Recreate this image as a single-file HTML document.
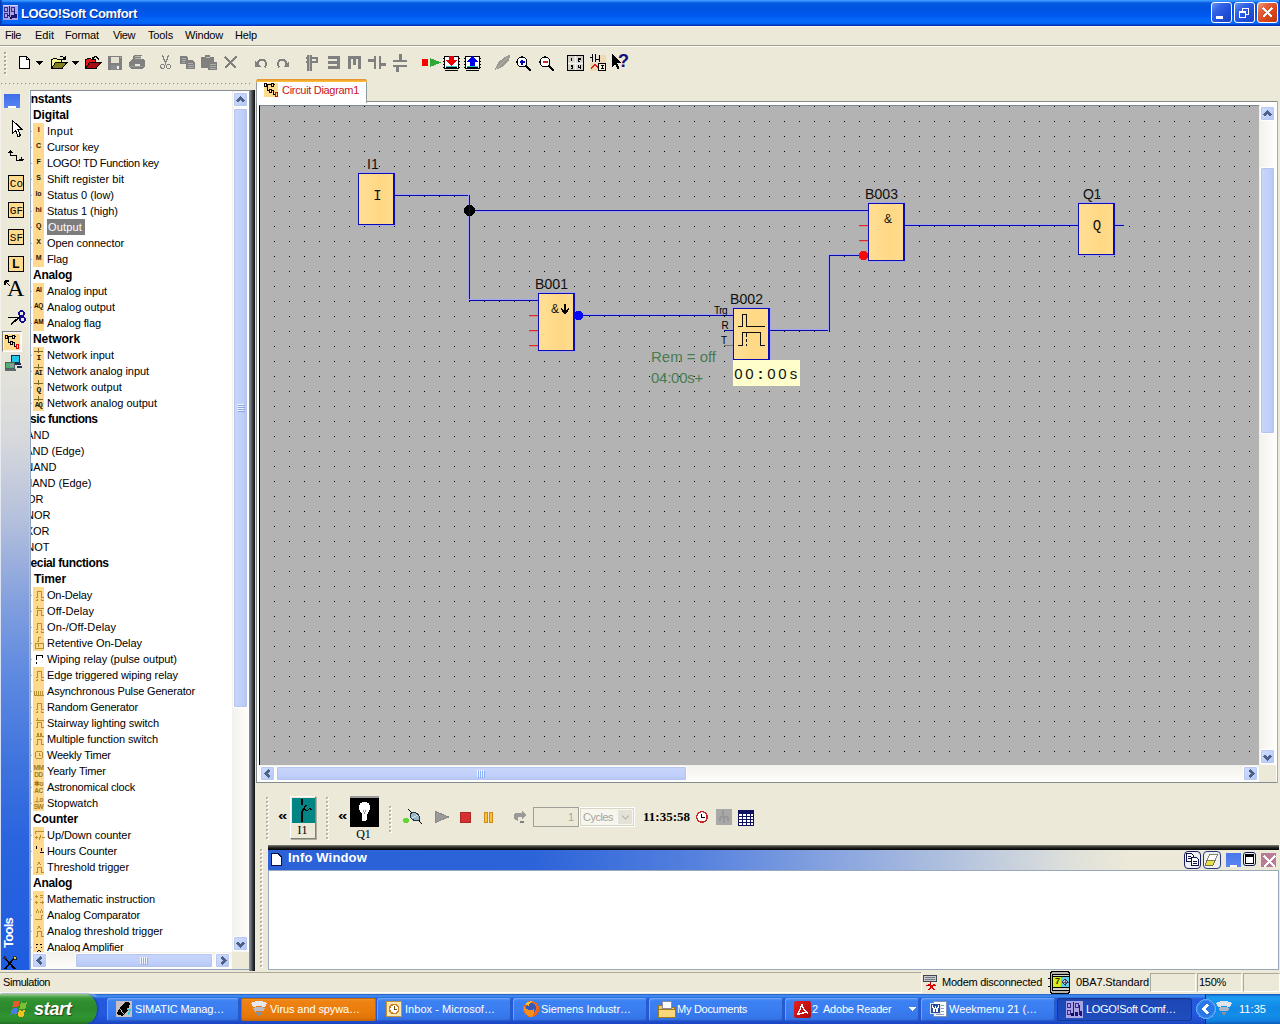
<!DOCTYPE html>
<html><head><meta charset="utf-8"><title>LOGO!Soft Comfort</title>
<style>
html,body{margin:0;padding:0;}
body{width:1280px;height:1024px;overflow:hidden;background:#ece9d8;position:relative;font-family:"Liberation Sans",sans-serif;font-size:11px;color:#000;}
div{position:absolute;box-sizing:border-box;}
svg{position:absolute;overflow:visible;}
.clip{overflow:hidden;}
</style></head>
<body>
<div style="left:0px;top:0px;width:1280px;height:26px;background:linear-gradient(to bottom,#3a96ff 0,#3a96ff 1px,#2a84fa 1.500px,#0e62e4 2.500px,#0358e0 4px,#0054e0 8px,#0056e8 12px,#0059f2 16px,#0466f8 19px,#0468fa 22px,#0060f4 24px,#0232b4 25px,#0232b4 26px);"></div>
<div style="left:0px;top:26px;width:1280px;height:1px;background:#f7f6f4;"></div>
<div style="left:0px;top:0px;width:3px;height:26px;background:linear-gradient(to right,#0238a8,rgba(2,56,168,0));"></div>
<div style="left:1279px;top:0px;width:1px;height:26px;background:#0a3cb0;"></div>
<svg style="left:3px;top:5px" width="15" height="15" viewBox="0 0 15 15" shape-rendering="crispEdges" ><rect x="0" y="0" width="15" height="15" fill="#a9a4e6"/><rect x="0" y="0" width="15" height="1" fill="#d8d4f8"/><rect x="1" y="2" width="3" height="4" fill="none" stroke="#3a2c90" stroke-width="1"/><rect x="1" y="8" width="3" height="4" fill="none" stroke="#3a2c90" stroke-width="1"/><rect x="6" y="1" width="1" height="11" fill="#20186c"/><rect x="4" y="10" width="3" height="1" fill="#20186c"/><rect x="8" y="2" width="3" height="4" fill="none" stroke="#3a2c90" stroke-width="1"/><rect x="11" y="4" width="1" height="9" fill="#20186c"/><rect x="8" y="10" width="3" height="3" fill="#1a1478"/><rect x="12" y="9" width="2" height="4" fill="#1a1478"/><rect x="7" y="12" width="2" height="2" fill="#0c0c50"/></svg>
<div style="left:21px;top:5.5px;height:16px;line-height:16px;font:bold 13px 'Liberation Sans';line-height:16px;letter-spacing:-0.355px;color:#fff;white-space:pre;text-shadow:1px 1px 0 #0a2a8a;">LOGO!Soft Comfort</div>
<div style="left:1211px;top:2px;width:21px;height:21px;background:linear-gradient(135deg,#6a94f4 0%,#3564e6 30%,#2250dc 60%,#1a40c0 100%);border:1px solid #fff;border-radius:3px;"></div>
<div style="left:1234px;top:2px;width:21px;height:21px;background:linear-gradient(135deg,#6a94f4 0%,#3564e6 30%,#2250dc 60%,#1a40c0 100%);border:1px solid #fff;border-radius:3px;"></div>
<div style="left:1257px;top:2px;width:21px;height:21px;background:linear-gradient(135deg,#f0a080 0%,#e2603c 30%,#d8481c 60%,#c03410 100%);border:1px solid #fff;border-radius:3px;"></div>
<div style="left:1216px;top:16px;width:7px;height:3px;background:#fff;"></div>
<svg style="left:1234px;top:2px" width="21" height="21" viewBox="0 0 21 21" shape-rendering="crispEdges" ><path d="M8.5 8.5v-2.5h6v6h-2.5" fill="none" stroke="#fff" stroke-width="1"/><rect x="5.5" y="9.5" width="6" height="6" fill="none" stroke="#fff"/><rect x="5" y="9" width="7" height="2" fill="#fff"/></svg>
<svg style="left:1257px;top:2px" width="21" height="21" viewBox="0 0 21 21" shape-rendering="crispEdges" shape-rendering="geometricPrecision"><path d="M6 6l9 9M15 6l-9 9" stroke="#fff" stroke-width="2.2" fill="none"/></svg>
<div style="left:0px;top:26px;width:1280px;height:19px;background:#ece9d8;"></div>
<div style="left:0px;top:26px;width:1280px;height:1px;background:#f7f6f4;"></div>
<div style="left:5px;top:27.5px;height:15px;line-height:15px;font:normal 11px 'Liberation Sans';line-height:15px;letter-spacing:-0.431px;color:#000;white-space:pre;">File</div>
<div style="left:35px;top:27.5px;height:15px;line-height:15px;font:normal 11px 'Liberation Sans';line-height:15px;letter-spacing:0.011px;color:#000;white-space:pre;">Edit</div>
<div style="left:65px;top:27.5px;height:15px;line-height:15px;font:normal 11px 'Liberation Sans';line-height:15px;letter-spacing:-0.139px;color:#000;white-space:pre;">Format</div>
<div style="left:113px;top:27.5px;height:15px;line-height:15px;font:normal 11px 'Liberation Sans';line-height:15px;letter-spacing:-0.411px;color:#000;white-space:pre;">View</div>
<div style="left:148px;top:27.5px;height:15px;line-height:15px;font:normal 11px 'Liberation Sans';line-height:15px;letter-spacing:-0.136px;color:#000;white-space:pre;">Tools</div>
<div style="left:185px;top:27.5px;height:15px;line-height:15px;font:normal 11px 'Liberation Sans';line-height:15px;letter-spacing:-0.187px;color:#000;white-space:pre;">Window</div>
<div style="left:235px;top:27.5px;height:15px;line-height:15px;font:normal 11px 'Liberation Sans';line-height:15px;letter-spacing:-0.156px;color:#000;white-space:pre;">Help</div>
<div style="left:0px;top:45px;width:1280px;height:1px;background:#a4a192;"></div>
<div style="left:0px;top:46px;width:1280px;height:1px;background:#fbfaf6;"></div>
<div style="left:4px;top:52px;width:2px;height:2px;background:#a9a694;"></div>
<div style="left:5px;top:53px;width:2px;height:2px;background:#fff;"></div>
<div style="left:5px;top:53px;width:1px;height:1px;background:#a9a694;"></div>
<div style="left:4px;top:56px;width:2px;height:2px;background:#a9a694;"></div>
<div style="left:5px;top:57px;width:2px;height:2px;background:#fff;"></div>
<div style="left:5px;top:57px;width:1px;height:1px;background:#a9a694;"></div>
<div style="left:4px;top:60px;width:2px;height:2px;background:#a9a694;"></div>
<div style="left:5px;top:61px;width:2px;height:2px;background:#fff;"></div>
<div style="left:5px;top:61px;width:1px;height:1px;background:#a9a694;"></div>
<div style="left:4px;top:64px;width:2px;height:2px;background:#a9a694;"></div>
<div style="left:5px;top:65px;width:2px;height:2px;background:#fff;"></div>
<div style="left:5px;top:65px;width:1px;height:1px;background:#a9a694;"></div>
<div style="left:4px;top:68px;width:2px;height:2px;background:#a9a694;"></div>
<div style="left:5px;top:69px;width:2px;height:2px;background:#fff;"></div>
<div style="left:5px;top:69px;width:1px;height:1px;background:#a9a694;"></div>
<div style="left:4px;top:72px;width:2px;height:2px;background:#a9a694;"></div>
<div style="left:5px;top:73px;width:2px;height:2px;background:#fff;"></div>
<div style="left:5px;top:73px;width:1px;height:1px;background:#a9a694;"></div>
<svg style="left:19px;top:56px" width="12" height="13" viewBox="0 0 12 13" shape-rendering="crispEdges" ><path d="M0.5 0.5h7l3 3v9h-10z" fill="#fff" stroke="#000"/><path d="M7.5 0.5v3h3" fill="none" stroke="#000"/></svg>
<svg style="left:36px;top:61px" width="7" height="4" viewBox="0 0 7 4" shape-rendering="crispEdges" shape-rendering="geometricPrecision"><path d="M0 0h7l-3.5 4z" fill="#000"/></svg>
<svg style="left:51px;top:55px" width="17" height="14" viewBox="0 0 17 14" shape-rendering="crispEdges" shape-rendering="geometricPrecision"><path d="M0.5 13.5v-9h1l1-1h3l1 1h4v3" fill="#f4f48c" stroke="#000"/><path d="M0.5 13.5l4-6h11.5l-5 6z" fill="#80801c" stroke="#000"/><path d="M8.5 2.5q2.5-3 5 1" fill="none" stroke="#000"/><path d="M14.5 1v4h-4z" fill="#000"/></svg>
<svg style="left:72px;top:61px" width="7" height="4" viewBox="0 0 7 4" shape-rendering="crispEdges" shape-rendering="geometricPrecision"><path d="M0 0h7l-3.5 4z" fill="#000"/></svg>
<svg style="left:85px;top:55px" width="17" height="14" viewBox="0 0 17 14" shape-rendering="crispEdges" shape-rendering="geometricPrecision"><path d="M0.5 13.5v-9h1l1-1h3l1 1h4v3" fill="#e81818" stroke="#000"/><path d="M0.5 13.5l4-6h11.5l-5 6z" fill="#a80c0c" stroke="#000"/><path d="M8 3.5q2.5-4 6 1" fill="none" stroke="#000" stroke-width="1.2"/><path d="M6.5 1v4h4z" fill="#000"/></svg>
<svg style="left:108px;top:56px" width="14" height="14" viewBox="0 0 14 14" shape-rendering="crispEdges" ><rect x="0" y="0" width="14" height="14" fill="#808080"/><rect x="3" y="1" width="8" height="6" fill="#e4e1d2"/><rect x="3" y="9" width="8" height="5" fill="#8c8c8c"/><rect x="9" y="10" width="2" height="3" fill="#f0f0f0"/><rect x="12" y="1" width="1" height="1" fill="#c0c0c0"/></svg>
<svg style="left:129px;top:55px" width="16" height="14" viewBox="0 0 16 14" shape-rendering="crispEdges" shape-rendering="geometricPrecision"><path d="M5 0h8l-2 5h-8z" fill="#808080"/><path d="M6 1.5h6M5.5 3h6" stroke="#c8c8c0" stroke-width="0.8"/><path d="M0 7l3-3h11l2 2v5l-2 3h-12l-2-2z" fill="#808080"/><rect x="6" y="9" width="5" height="1.5" fill="#e8e8e0"/><path d="M1 11.5h13" stroke="#a0a098" stroke-width="0.8"/></svg>
<svg style="left:160px;top:55px" width="11" height="15" viewBox="0 0 11 15" shape-rendering="crispEdges" shape-rendering="geometricPrecision"><path d="M2.5 0.5l3.5 9M8.5 0.5l-3.5 9" stroke="#808080" stroke-width="1.3" fill="none"/><circle cx="2.5" cy="11.5" r="2" fill="none" stroke="#808080" stroke-width="1.2"/><circle cx="8.5" cy="11.5" r="2" fill="none" stroke="#808080" stroke-width="1.2"/></svg>
<svg style="left:180px;top:56px" width="15" height="13" viewBox="0 0 15 13" shape-rendering="crispEdges" shape-rendering="geometricPrecision"><path d="M0 0h6l2 2v6h-8z" fill="#808080"/><path d="M6 4h6l3 3v6h-9z" fill="#808080"/><path d="M1.5 2.5h4M1.5 4.5h4M1.5 6.5h3" stroke="#b8b8b0" stroke-width="0.8"/><path d="M7.5 7.5h5M7.5 9.5h6M7.5 11.5h6" stroke="#b8b8b0" stroke-width="0.8"/></svg>
<svg style="left:201px;top:55px" width="17" height="15" viewBox="0 0 17 15" shape-rendering="crispEdges" shape-rendering="geometricPrecision"><path d="M0 3q0-1.5 1.5-1.5h10q1.5 0 1.5 1.5v10h-13z" fill="#808080"/><rect x="4" y="0" width="5" height="3" rx="1" fill="#808080"/><rect x="4.5" y="1.5" width="4" height="1" fill="#c0c0b8"/><path d="M7 7h9v8h-9z" fill="#808080"/><path d="M8.5 9.5h6M8.5 11.5h6M8.5 13.5h6" stroke="#b8b8b0" stroke-width="0.8"/></svg>
<svg style="left:224px;top:56px" width="14" height="13" viewBox="0 0 14 13" shape-rendering="crispEdges" shape-rendering="geometricPrecision"><path d="M1 1l11 11M12.5 0.5l-11.5 11.5" stroke="#808080" stroke-width="2" fill="none"/></svg>
<svg style="left:255px;top:57.5px" width="13" height="9" viewBox="0 0 13 9" shape-rendering="crispEdges" shape-rendering="geometricPrecision"><path d="M3.400 8.200A4.200 4.200 0 1 1 9.800 9" stroke="#808080" stroke-width="2" fill="none"/><path d="M0 3v5.500h5.500z" fill="#808080"/></svg>
<svg style="left:276px;top:57.5px" width="13" height="9" viewBox="0 0 13 9" shape-rendering="crispEdges" shape-rendering="geometricPrecision"><g transform="translate(13,0) scale(-1,1)"><path d="M3.400 8.200A4.200 4.200 0 1 1 9.800 9" stroke="#808080" stroke-width="2" fill="none"/><path d="M0 3v5.500h5.500z" fill="#808080"/></g></svg>
<svg style="left:306px;top:54px" width="13" height="17" viewBox="0 0 13 17" shape-rendering="crispEdges" ><rect x="1" y="1" width="2" height="16" fill="#808080"/><rect x="4" y="1" width="2" height="16" fill="#808080"/><rect x="0" y="3" width="12" height="2" fill="#808080"/><rect x="0" y="7" width="12" height="2" fill="#808080"/><rect x="10" y="3" width="2" height="6" fill="#808080"/><rect x="3" y="1" width="1" height="16" fill="#b8b8b0"/></svg>
<svg style="left:328px;top:56px" width="12" height="13" viewBox="0 0 12 13" shape-rendering="crispEdges" ><rect x="0" y="0" width="12" height="3" fill="#808080"/><rect x="0" y="5" width="12" height="3" fill="#808080"/><rect x="0" y="10" width="12" height="3" fill="#808080"/><rect x="9" y="0" width="3" height="13" fill="#808080"/></svg>
<svg style="left:348px;top:56px" width="13" height="13" viewBox="0 0 13 13" shape-rendering="crispEdges" ><rect x="0" y="0" width="13" height="3" fill="#808080"/><rect x="0" y="0" width="3" height="13" fill="#808080"/><rect x="5" y="0" width="3" height="9" fill="#808080"/><rect x="10" y="0" width="3" height="13" fill="#808080"/></svg>
<svg style="left:368px;top:56px" width="18" height="13" viewBox="0 0 18 13" shape-rendering="crispEdges" ><rect x="0" y="3" width="8" height="3" fill="#808080"/><rect x="6" y="0" width="2" height="13" fill="#808080"/><rect x="11" y="0" width="2" height="13" fill="#808080"/><rect x="11" y="7" width="7" height="3" fill="#808080"/></svg>
<svg style="left:393px;top:54px" width="14" height="18" viewBox="0 0 14 18" shape-rendering="crispEdges" ><rect x="6" y="0" width="3" height="8" fill="#808080"/><rect x="0" y="6" width="14" height="2" fill="#808080"/><rect x="0" y="11" width="14" height="2" fill="#808080"/><rect x="3" y="11" width="3" height="7" fill="#808080"/></svg>
<svg style="left:421px;top:58px" width="20" height="11" viewBox="0 0 20 11" shape-rendering="crispEdges" shape-rendering="geometricPrecision"><rect x="1" y="1" width="6" height="7" fill="#f80000"/><path d="M9 0l11 4.500l-11 4.500z" fill="#30a838"/></svg>
<svg style="left:443px;top:54.5px" width="17" height="17" viewBox="0 0 17 17" shape-rendering="crispEdges" shape-rendering="geometricPrecision"><rect x="1.500" y="1.500" width="14" height="12" fill="#fff" stroke="#000"/><path d="M0 3h2M0 6h2M0 9h2M0 12h2M15 3h2M15 6h2M15 9h2M15 12h2" stroke="#000"/><rect x="3" y="12" width="11" height="2" fill="#000"/><rect x="2" y="15" width="13" height="1" fill="#000"/><rect x="3" y="11" width="11" height="1" fill="#30c8c8"/><path d="M6 1h5v4h3l-5.500 6l-5.500-6h3z" fill="#e80000"/></svg>
<svg style="left:464px;top:54.5px" width="17" height="17" viewBox="0 0 17 17" shape-rendering="crispEdges" shape-rendering="geometricPrecision"><rect x="1.500" y="1.500" width="14" height="12" fill="#fff" stroke="#000"/><path d="M0 3h2M0 6h2M0 9h2M0 12h2M15 3h2M15 6h2M15 9h2M15 12h2" stroke="#000"/><rect x="3" y="12" width="11" height="2" fill="#000"/><rect x="2" y="15" width="13" height="1" fill="#000"/><rect x="3" y="11" width="11" height="1" fill="#30c8c8"/><path d="M6 11h5v-4h3l-5.500-6l-5.500 6h3z" fill="#0000e8"/></svg>
<svg style="left:495px;top:55px" width="16" height="15" viewBox="0 0 16 15" shape-rendering="crispEdges" shape-rendering="geometricPrecision"><path d="M0 15q1-6 6-10q5-4.500 9-5q0 5-4 9q-4 4-11 6z" fill="#9a9a92"/><path d="M1 14l12-12" stroke="#b8b8b0" stroke-width="0.800"/></svg>
<svg style="left:516px;top:56px" width="16" height="16" viewBox="0 0 16 16" shape-rendering="crispEdges" shape-rendering="geometricPrecision"><circle cx="6" cy="6" r="5" fill="#fff" stroke="#000" stroke-width="1.200"/><path d="M3.500 6h5" stroke="#0000c0" stroke-width="1.300"/><path d="M6 3.500v5" stroke="#0000c0" stroke-width="1.300"/><path d="M10 10l5 5" stroke="#000" stroke-width="2.200"/></svg>
<svg style="left:539px;top:56px" width="16" height="16" viewBox="0 0 16 16" shape-rendering="crispEdges" shape-rendering="geometricPrecision"><circle cx="6" cy="6" r="5" fill="#fff" stroke="#000" stroke-width="1.200"/><path d="M3.500 6h5" stroke="#c03030" stroke-width="1.300"/><path d="M10 10l5 5" stroke="#000" stroke-width="2.200"/></svg>
<svg style="left:567px;top:55px" width="17" height="16" viewBox="0 0 17 16" shape-rendering="crispEdges" ><rect x="0.500" y="0.500" width="16" height="15" fill="#d4d0c8" stroke="#000"/><path d="M8.500 1v14M1 8h15" stroke="#fff"/><path d="M8.500 2v12M2 8h13" stroke="#e8e8e8" stroke-width="3" opacity="0.600"/><path d="M4.500 3v3M11 3h2v1.500h-2v1.500h2M4 10h1.500v3h-1.500M5.500 11.500h-1.500M11 10v2h2M13 10v4" stroke="#000" stroke-width="1" fill="none"/></svg>
<svg style="left:590px;top:54px" width="17" height="17" viewBox="0 0 17 17" shape-rendering="crispEdges" shape-rendering="geometricPrecision"><rect x="0" y="1" width="16" height="16" fill="#f0d8b0"/><rect x="0" y="1" width="9" height="8" fill="#e8e4d8"/><path d="M2.500 0v8M5.500 0v8M9.500 1v7M0 3.500h3M5 5.500h5" stroke="#000"/><path d="M1 15l4-5l3 4" fill="none" stroke="#d82020" stroke-width="1.300"/><rect x="8.500" y="9.500" width="7" height="7" fill="#f8f0d8" stroke="#000"/><path d="M10.500 11.500h3M10.500 14.500h3M12 11.500v3" stroke="#000"/></svg>
<svg style="left:611px;top:54px" width="18" height="17" viewBox="0 0 18 17" shape-rendering="crispEdges" shape-rendering="geometricPrecision"><path d="M1 0v13l3-3l2.500 5l2-1l-2.500-5h4.500z" fill="#000"/></svg>
<div style="left:618px;top:51px;font:bold 18px 'Liberation Sans';color:#101078;line-height:20px;">?</div>
<div style="left:1px;top:83px;width:2px;height:2px;background:#cfccbc;"></div>
<div style="left:1px;top:83px;width:1px;height:1px;background:#a4a190;"></div>
<div style="left:2px;top:84px;width:1px;height:1px;background:#fff;"></div>
<div style="left:5px;top:83px;width:2px;height:2px;background:#cfccbc;"></div>
<div style="left:5px;top:83px;width:1px;height:1px;background:#a4a190;"></div>
<div style="left:6px;top:84px;width:1px;height:1px;background:#fff;"></div>
<div style="left:9px;top:83px;width:2px;height:2px;background:#cfccbc;"></div>
<div style="left:9px;top:83px;width:1px;height:1px;background:#a4a190;"></div>
<div style="left:10px;top:84px;width:1px;height:1px;background:#fff;"></div>
<div style="left:13px;top:83px;width:2px;height:2px;background:#cfccbc;"></div>
<div style="left:13px;top:83px;width:1px;height:1px;background:#a4a190;"></div>
<div style="left:14px;top:84px;width:1px;height:1px;background:#fff;"></div>
<div style="left:17px;top:83px;width:2px;height:2px;background:#cfccbc;"></div>
<div style="left:17px;top:83px;width:1px;height:1px;background:#a4a190;"></div>
<div style="left:18px;top:84px;width:1px;height:1px;background:#fff;"></div>
<div style="left:21px;top:83px;width:2px;height:2px;background:#cfccbc;"></div>
<div style="left:21px;top:83px;width:1px;height:1px;background:#a4a190;"></div>
<div style="left:22px;top:84px;width:1px;height:1px;background:#fff;"></div>
<div style="left:25px;top:83px;width:2px;height:2px;background:#cfccbc;"></div>
<div style="left:25px;top:83px;width:1px;height:1px;background:#a4a190;"></div>
<div style="left:26px;top:84px;width:1px;height:1px;background:#fff;"></div>
<div style="left:29px;top:83px;width:2px;height:2px;background:#cfccbc;"></div>
<div style="left:29px;top:83px;width:1px;height:1px;background:#a4a190;"></div>
<div style="left:30px;top:84px;width:1px;height:1px;background:#fff;"></div>
<div style="left:33px;top:83px;width:2px;height:2px;background:#cfccbc;"></div>
<div style="left:33px;top:83px;width:1px;height:1px;background:#a4a190;"></div>
<div style="left:34px;top:84px;width:1px;height:1px;background:#fff;"></div>
<div style="left:37px;top:83px;width:2px;height:2px;background:#cfccbc;"></div>
<div style="left:37px;top:83px;width:1px;height:1px;background:#a4a190;"></div>
<div style="left:38px;top:84px;width:1px;height:1px;background:#fff;"></div>
<div style="left:41px;top:83px;width:2px;height:2px;background:#cfccbc;"></div>
<div style="left:41px;top:83px;width:1px;height:1px;background:#a4a190;"></div>
<div style="left:42px;top:84px;width:1px;height:1px;background:#fff;"></div>
<div style="left:45px;top:83px;width:2px;height:2px;background:#cfccbc;"></div>
<div style="left:45px;top:83px;width:1px;height:1px;background:#a4a190;"></div>
<div style="left:46px;top:84px;width:1px;height:1px;background:#fff;"></div>
<div style="left:49px;top:83px;width:2px;height:2px;background:#cfccbc;"></div>
<div style="left:49px;top:83px;width:1px;height:1px;background:#a4a190;"></div>
<div style="left:50px;top:84px;width:1px;height:1px;background:#fff;"></div>
<div style="left:53px;top:83px;width:2px;height:2px;background:#cfccbc;"></div>
<div style="left:53px;top:83px;width:1px;height:1px;background:#a4a190;"></div>
<div style="left:54px;top:84px;width:1px;height:1px;background:#fff;"></div>
<div style="left:57px;top:83px;width:2px;height:2px;background:#cfccbc;"></div>
<div style="left:57px;top:83px;width:1px;height:1px;background:#a4a190;"></div>
<div style="left:58px;top:84px;width:1px;height:1px;background:#fff;"></div>
<div style="left:61px;top:83px;width:2px;height:2px;background:#cfccbc;"></div>
<div style="left:61px;top:83px;width:1px;height:1px;background:#a4a190;"></div>
<div style="left:62px;top:84px;width:1px;height:1px;background:#fff;"></div>
<div style="left:65px;top:83px;width:2px;height:2px;background:#cfccbc;"></div>
<div style="left:65px;top:83px;width:1px;height:1px;background:#a4a190;"></div>
<div style="left:66px;top:84px;width:1px;height:1px;background:#fff;"></div>
<div style="left:69px;top:83px;width:2px;height:2px;background:#cfccbc;"></div>
<div style="left:69px;top:83px;width:1px;height:1px;background:#a4a190;"></div>
<div style="left:70px;top:84px;width:1px;height:1px;background:#fff;"></div>
<div style="left:73px;top:83px;width:2px;height:2px;background:#cfccbc;"></div>
<div style="left:73px;top:83px;width:1px;height:1px;background:#a4a190;"></div>
<div style="left:74px;top:84px;width:1px;height:1px;background:#fff;"></div>
<div style="left:77px;top:83px;width:2px;height:2px;background:#cfccbc;"></div>
<div style="left:77px;top:83px;width:1px;height:1px;background:#a4a190;"></div>
<div style="left:78px;top:84px;width:1px;height:1px;background:#fff;"></div>
<div style="left:81px;top:83px;width:2px;height:2px;background:#cfccbc;"></div>
<div style="left:81px;top:83px;width:1px;height:1px;background:#a4a190;"></div>
<div style="left:82px;top:84px;width:1px;height:1px;background:#fff;"></div>
<div style="left:85px;top:83px;width:2px;height:2px;background:#cfccbc;"></div>
<div style="left:85px;top:83px;width:1px;height:1px;background:#a4a190;"></div>
<div style="left:86px;top:84px;width:1px;height:1px;background:#fff;"></div>
<div style="left:89px;top:83px;width:2px;height:2px;background:#cfccbc;"></div>
<div style="left:89px;top:83px;width:1px;height:1px;background:#a4a190;"></div>
<div style="left:90px;top:84px;width:1px;height:1px;background:#fff;"></div>
<div style="left:93px;top:83px;width:2px;height:2px;background:#cfccbc;"></div>
<div style="left:93px;top:83px;width:1px;height:1px;background:#a4a190;"></div>
<div style="left:94px;top:84px;width:1px;height:1px;background:#fff;"></div>
<div style="left:97px;top:83px;width:2px;height:2px;background:#cfccbc;"></div>
<div style="left:97px;top:83px;width:1px;height:1px;background:#a4a190;"></div>
<div style="left:98px;top:84px;width:1px;height:1px;background:#fff;"></div>
<div style="left:101px;top:83px;width:2px;height:2px;background:#cfccbc;"></div>
<div style="left:101px;top:83px;width:1px;height:1px;background:#a4a190;"></div>
<div style="left:102px;top:84px;width:1px;height:1px;background:#fff;"></div>
<div style="left:105px;top:83px;width:2px;height:2px;background:#cfccbc;"></div>
<div style="left:105px;top:83px;width:1px;height:1px;background:#a4a190;"></div>
<div style="left:106px;top:84px;width:1px;height:1px;background:#fff;"></div>
<div style="left:109px;top:83px;width:2px;height:2px;background:#cfccbc;"></div>
<div style="left:109px;top:83px;width:1px;height:1px;background:#a4a190;"></div>
<div style="left:110px;top:84px;width:1px;height:1px;background:#fff;"></div>
<div style="left:113px;top:83px;width:2px;height:2px;background:#cfccbc;"></div>
<div style="left:113px;top:83px;width:1px;height:1px;background:#a4a190;"></div>
<div style="left:114px;top:84px;width:1px;height:1px;background:#fff;"></div>
<div style="left:117px;top:83px;width:2px;height:2px;background:#cfccbc;"></div>
<div style="left:117px;top:83px;width:1px;height:1px;background:#a4a190;"></div>
<div style="left:118px;top:84px;width:1px;height:1px;background:#fff;"></div>
<div style="left:121px;top:83px;width:2px;height:2px;background:#cfccbc;"></div>
<div style="left:121px;top:83px;width:1px;height:1px;background:#a4a190;"></div>
<div style="left:122px;top:84px;width:1px;height:1px;background:#fff;"></div>
<div style="left:125px;top:83px;width:2px;height:2px;background:#cfccbc;"></div>
<div style="left:125px;top:83px;width:1px;height:1px;background:#a4a190;"></div>
<div style="left:126px;top:84px;width:1px;height:1px;background:#fff;"></div>
<div style="left:129px;top:83px;width:2px;height:2px;background:#cfccbc;"></div>
<div style="left:129px;top:83px;width:1px;height:1px;background:#a4a190;"></div>
<div style="left:130px;top:84px;width:1px;height:1px;background:#fff;"></div>
<div style="left:133px;top:83px;width:2px;height:2px;background:#cfccbc;"></div>
<div style="left:133px;top:83px;width:1px;height:1px;background:#a4a190;"></div>
<div style="left:134px;top:84px;width:1px;height:1px;background:#fff;"></div>
<div style="left:137px;top:83px;width:2px;height:2px;background:#cfccbc;"></div>
<div style="left:137px;top:83px;width:1px;height:1px;background:#a4a190;"></div>
<div style="left:138px;top:84px;width:1px;height:1px;background:#fff;"></div>
<div style="left:141px;top:83px;width:2px;height:2px;background:#cfccbc;"></div>
<div style="left:141px;top:83px;width:1px;height:1px;background:#a4a190;"></div>
<div style="left:142px;top:84px;width:1px;height:1px;background:#fff;"></div>
<div style="left:145px;top:83px;width:2px;height:2px;background:#cfccbc;"></div>
<div style="left:145px;top:83px;width:1px;height:1px;background:#a4a190;"></div>
<div style="left:146px;top:84px;width:1px;height:1px;background:#fff;"></div>
<div style="left:149px;top:83px;width:2px;height:2px;background:#cfccbc;"></div>
<div style="left:149px;top:83px;width:1px;height:1px;background:#a4a190;"></div>
<div style="left:150px;top:84px;width:1px;height:1px;background:#fff;"></div>
<div style="left:153px;top:83px;width:2px;height:2px;background:#cfccbc;"></div>
<div style="left:153px;top:83px;width:1px;height:1px;background:#a4a190;"></div>
<div style="left:154px;top:84px;width:1px;height:1px;background:#fff;"></div>
<div style="left:157px;top:83px;width:2px;height:2px;background:#cfccbc;"></div>
<div style="left:157px;top:83px;width:1px;height:1px;background:#a4a190;"></div>
<div style="left:158px;top:84px;width:1px;height:1px;background:#fff;"></div>
<div style="left:161px;top:83px;width:2px;height:2px;background:#cfccbc;"></div>
<div style="left:161px;top:83px;width:1px;height:1px;background:#a4a190;"></div>
<div style="left:162px;top:84px;width:1px;height:1px;background:#fff;"></div>
<div style="left:165px;top:83px;width:2px;height:2px;background:#cfccbc;"></div>
<div style="left:165px;top:83px;width:1px;height:1px;background:#a4a190;"></div>
<div style="left:166px;top:84px;width:1px;height:1px;background:#fff;"></div>
<div style="left:169px;top:83px;width:2px;height:2px;background:#cfccbc;"></div>
<div style="left:169px;top:83px;width:1px;height:1px;background:#a4a190;"></div>
<div style="left:170px;top:84px;width:1px;height:1px;background:#fff;"></div>
<div style="left:173px;top:83px;width:2px;height:2px;background:#cfccbc;"></div>
<div style="left:173px;top:83px;width:1px;height:1px;background:#a4a190;"></div>
<div style="left:174px;top:84px;width:1px;height:1px;background:#fff;"></div>
<div style="left:177px;top:83px;width:2px;height:2px;background:#cfccbc;"></div>
<div style="left:177px;top:83px;width:1px;height:1px;background:#a4a190;"></div>
<div style="left:178px;top:84px;width:1px;height:1px;background:#fff;"></div>
<div style="left:181px;top:83px;width:2px;height:2px;background:#cfccbc;"></div>
<div style="left:181px;top:83px;width:1px;height:1px;background:#a4a190;"></div>
<div style="left:182px;top:84px;width:1px;height:1px;background:#fff;"></div>
<div style="left:185px;top:83px;width:2px;height:2px;background:#cfccbc;"></div>
<div style="left:185px;top:83px;width:1px;height:1px;background:#a4a190;"></div>
<div style="left:186px;top:84px;width:1px;height:1px;background:#fff;"></div>
<div style="left:189px;top:83px;width:2px;height:2px;background:#cfccbc;"></div>
<div style="left:189px;top:83px;width:1px;height:1px;background:#a4a190;"></div>
<div style="left:190px;top:84px;width:1px;height:1px;background:#fff;"></div>
<div style="left:193px;top:83px;width:2px;height:2px;background:#cfccbc;"></div>
<div style="left:193px;top:83px;width:1px;height:1px;background:#a4a190;"></div>
<div style="left:194px;top:84px;width:1px;height:1px;background:#fff;"></div>
<div style="left:197px;top:83px;width:2px;height:2px;background:#cfccbc;"></div>
<div style="left:197px;top:83px;width:1px;height:1px;background:#a4a190;"></div>
<div style="left:198px;top:84px;width:1px;height:1px;background:#fff;"></div>
<div style="left:201px;top:83px;width:2px;height:2px;background:#cfccbc;"></div>
<div style="left:201px;top:83px;width:1px;height:1px;background:#a4a190;"></div>
<div style="left:202px;top:84px;width:1px;height:1px;background:#fff;"></div>
<div style="left:205px;top:83px;width:2px;height:2px;background:#cfccbc;"></div>
<div style="left:205px;top:83px;width:1px;height:1px;background:#a4a190;"></div>
<div style="left:206px;top:84px;width:1px;height:1px;background:#fff;"></div>
<div style="left:209px;top:83px;width:2px;height:2px;background:#cfccbc;"></div>
<div style="left:209px;top:83px;width:1px;height:1px;background:#a4a190;"></div>
<div style="left:210px;top:84px;width:1px;height:1px;background:#fff;"></div>
<div style="left:213px;top:83px;width:2px;height:2px;background:#cfccbc;"></div>
<div style="left:213px;top:83px;width:1px;height:1px;background:#a4a190;"></div>
<div style="left:214px;top:84px;width:1px;height:1px;background:#fff;"></div>
<div style="left:217px;top:83px;width:2px;height:2px;background:#cfccbc;"></div>
<div style="left:217px;top:83px;width:1px;height:1px;background:#a4a190;"></div>
<div style="left:218px;top:84px;width:1px;height:1px;background:#fff;"></div>
<div style="left:221px;top:83px;width:2px;height:2px;background:#cfccbc;"></div>
<div style="left:221px;top:83px;width:1px;height:1px;background:#a4a190;"></div>
<div style="left:222px;top:84px;width:1px;height:1px;background:#fff;"></div>
<div style="left:225px;top:83px;width:2px;height:2px;background:#cfccbc;"></div>
<div style="left:225px;top:83px;width:1px;height:1px;background:#a4a190;"></div>
<div style="left:226px;top:84px;width:1px;height:1px;background:#fff;"></div>
<div style="left:229px;top:83px;width:2px;height:2px;background:#cfccbc;"></div>
<div style="left:229px;top:83px;width:1px;height:1px;background:#a4a190;"></div>
<div style="left:230px;top:84px;width:1px;height:1px;background:#fff;"></div>
<div style="left:233px;top:83px;width:2px;height:2px;background:#cfccbc;"></div>
<div style="left:233px;top:83px;width:1px;height:1px;background:#a4a190;"></div>
<div style="left:234px;top:84px;width:1px;height:1px;background:#fff;"></div>
<div style="left:237px;top:83px;width:2px;height:2px;background:#cfccbc;"></div>
<div style="left:237px;top:83px;width:1px;height:1px;background:#a4a190;"></div>
<div style="left:238px;top:84px;width:1px;height:1px;background:#fff;"></div>
<div style="left:241px;top:83px;width:2px;height:2px;background:#cfccbc;"></div>
<div style="left:241px;top:83px;width:1px;height:1px;background:#a4a190;"></div>
<div style="left:242px;top:84px;width:1px;height:1px;background:#fff;"></div>
<div style="left:245px;top:83px;width:2px;height:2px;background:#cfccbc;"></div>
<div style="left:245px;top:83px;width:1px;height:1px;background:#a4a190;"></div>
<div style="left:246px;top:84px;width:1px;height:1px;background:#fff;"></div>
<div style="left:249px;top:83px;width:2px;height:2px;background:#cfccbc;"></div>
<div style="left:249px;top:83px;width:1px;height:1px;background:#a4a190;"></div>
<div style="left:250px;top:84px;width:1px;height:1px;background:#fff;"></div>
<div style="left:0px;top:86px;width:30px;height:884px;background:linear-gradient(to bottom,#ece9d8 0,#ece9d8 244px,#d6d8dc 354px,#b4c0dc 434px,#84a0de 514px,#5c88e0 594px,#4074de 674px,#2a64de 754px,#1e5ce0 885px);"></div>
<div style="left:29px;top:90px;width:1px;height:880px;background:linear-gradient(to bottom,#f4f2ea 0,#f4f2ea 240px,#a8bce8 500px,#5a88e4 880px);"></div>
<div style="left:30px;top:90px;width:219px;height:880px;background:#fff;border:1px solid #8fa3bd;border-top-color:#898c95;"></div>
<div class="clip" style="left:31px;top:91px;width:201px;height:861px;"><div style="left:-31px;top:-91px;width:300px;height:1000px;"><div style="left:15.243024553571425px;top:91.0px;height:16px;line-height:16px;font:bold 12px 'Liberation Sans';line-height:16px;letter-spacing:0.000px;color:#000;white-space:pre;letter-spacing:-0.239px;">Constants</div><div style="left:33px;top:107.0px;height:16px;line-height:16px;font:bold 12px 'Liberation Sans';line-height:16px;letter-spacing:-0.095px;color:#000;white-space:pre;">Digital</div><div style="left:33px;top:123px;width:11px;height:16px;background:#ffd98e;"></div><div style="left:33px;top:123px;width:11px;height:16px;text-align:center;font:bold 7px/13px 'Liberation Sans';letter-spacing:-0.3px;color:#1a1408;white-space:pre;">I</div><div style="left:31px;top:131px;width:1px;height:1px;background:#a8b8cc;"></div><div style="left:47px;top:123.5px;height:15px;line-height:15px;font:normal 11px 'Liberation Sans';line-height:15px;letter-spacing:0.307px;color:#000;white-space:pre;">Input</div><div style="left:33px;top:139px;width:11px;height:16px;background:#ffd98e;"></div><div style="left:33px;top:139px;width:11px;height:16px;text-align:center;font:bold 7px/13px 'Liberation Sans';letter-spacing:-0.3px;color:#1a1408;white-space:pre;">C</div><div style="left:31px;top:147px;width:1px;height:1px;background:#a8b8cc;"></div><div style="left:47px;top:139.5px;height:15px;line-height:15px;font:normal 11px 'Liberation Sans';line-height:15px;letter-spacing:-0.118px;color:#000;white-space:pre;">Cursor key</div><div style="left:33px;top:155px;width:11px;height:16px;background:#ffd98e;"></div><div style="left:33px;top:155px;width:11px;height:16px;text-align:center;font:bold 7px/13px 'Liberation Sans';letter-spacing:-0.3px;color:#1a1408;white-space:pre;">F</div><div style="left:31px;top:163px;width:1px;height:1px;background:#a8b8cc;"></div><div style="left:47px;top:155.5px;height:15px;line-height:15px;font:normal 11px 'Liberation Sans';line-height:15px;letter-spacing:-0.285px;color:#000;white-space:pre;">LOGO! TD Function key</div><div style="left:33px;top:171px;width:11px;height:16px;background:#ffd98e;"></div><div style="left:33px;top:171px;width:11px;height:16px;text-align:center;font:bold 7px/13px 'Liberation Sans';letter-spacing:-0.3px;color:#1a1408;white-space:pre;">S</div><div style="left:31px;top:179px;width:1px;height:1px;background:#a8b8cc;"></div><div style="left:47px;top:171.5px;height:15px;line-height:15px;font:normal 11px 'Liberation Sans';line-height:15px;letter-spacing:0.032px;color:#000;white-space:pre;">Shift register bit</div><div style="left:33px;top:187px;width:11px;height:16px;background:#ffd98e;"></div><div style="left:33px;top:187px;width:11px;height:16px;text-align:center;font:bold 7px/13px 'Liberation Sans';letter-spacing:-0.1px;color:#1a1408;white-space:pre;">lo</div><div style="left:31px;top:195px;width:1px;height:1px;background:#a8b8cc;"></div><div style="left:47px;top:187.5px;height:15px;line-height:15px;font:normal 11px 'Liberation Sans';line-height:15px;letter-spacing:-0.018px;color:#000;white-space:pre;">Status 0 (low)</div><div style="left:33px;top:203px;width:11px;height:16px;background:#ffd98e;"></div><div style="left:33px;top:203px;width:11px;height:16px;text-align:center;font:bold 7px/13px 'Liberation Sans';letter-spacing:-0.1px;color:#1a1408;white-space:pre;">hi</div><div style="left:31px;top:211px;width:1px;height:1px;background:#a8b8cc;"></div><div style="left:47px;top:203.5px;height:15px;line-height:15px;font:normal 11px 'Liberation Sans';line-height:15px;letter-spacing:-0.036px;color:#000;white-space:pre;">Status 1 (high)</div><div style="left:33px;top:219px;width:11px;height:16px;background:#ffd98e;"></div><div style="left:33px;top:219px;width:11px;height:16px;text-align:center;font:bold 7px/13px 'Liberation Sans';letter-spacing:-0.3px;color:#1a1408;white-space:pre;">Q</div><div style="left:31px;top:227px;width:1px;height:1px;background:#a8b8cc;"></div><div style="left:47px;top:219px;width:38px;height:16px;background:#7d7d7d;"></div><div style="left:48px;top:219.5px;height:15px;line-height:15px;font:normal 11px 'Liberation Sans';line-height:15px;letter-spacing:0.163px;color:#fff;white-space:pre;">Output</div><div style="left:33px;top:235px;width:11px;height:16px;background:#ffd98e;"></div><div style="left:33px;top:235px;width:11px;height:16px;text-align:center;font:bold 7px/13px 'Liberation Sans';letter-spacing:-0.3px;color:#1a1408;white-space:pre;">X</div><div style="left:31px;top:243px;width:1px;height:1px;background:#a8b8cc;"></div><div style="left:47px;top:235.5px;height:15px;line-height:15px;font:normal 11px 'Liberation Sans';line-height:15px;letter-spacing:-0.091px;color:#000;white-space:pre;">Open connector</div><div style="left:33px;top:251px;width:11px;height:16px;background:#ffd98e;"></div><div style="left:33px;top:251px;width:11px;height:16px;text-align:center;font:bold 7px/13px 'Liberation Sans';letter-spacing:-0.3px;color:#1a1408;white-space:pre;">M</div><div style="left:31px;top:259px;width:1px;height:1px;background:#a8b8cc;"></div><div style="left:47px;top:251.5px;height:15px;line-height:15px;font:normal 11px 'Liberation Sans';line-height:15px;letter-spacing:-0.100px;color:#000;white-space:pre;">Flag</div><div style="left:33px;top:267.0px;height:16px;line-height:16px;font:bold 12px 'Liberation Sans';line-height:16px;letter-spacing:-0.277px;color:#000;white-space:pre;">Analog</div><div style="left:33px;top:283px;width:11px;height:16px;background:#ffd98e;"></div><div style="left:33px;top:283px;width:11px;height:16px;text-align:center;font:bold 6.5px/13px 'Liberation Sans';letter-spacing:-0.4px;color:#1a1408;white-space:pre;">AI</div><div style="left:31px;top:291px;width:1px;height:1px;background:#a8b8cc;"></div><div style="left:47px;top:283.5px;height:15px;line-height:15px;font:normal 11px 'Liberation Sans';line-height:15px;letter-spacing:-0.097px;color:#000;white-space:pre;">Analog input</div><div style="left:33px;top:299px;width:11px;height:16px;background:#ffd98e;"></div><div style="left:33px;top:299px;width:11px;height:16px;text-align:center;font:bold 6.5px/13px 'Liberation Sans';letter-spacing:-0.4px;color:#1a1408;white-space:pre;">AQ</div><div style="left:31px;top:307px;width:1px;height:1px;background:#a8b8cc;"></div><div style="left:47px;top:299.5px;height:15px;line-height:15px;font:normal 11px 'Liberation Sans';line-height:15px;letter-spacing:0.008px;color:#000;white-space:pre;">Analog output</div><div style="left:33px;top:315px;width:11px;height:16px;background:#ffd98e;"></div><div style="left:33px;top:315px;width:11px;height:16px;text-align:center;font:bold 6.5px/13px 'Liberation Sans';letter-spacing:-0.4px;color:#1a1408;white-space:pre;">AM</div><div style="left:31px;top:323px;width:1px;height:1px;background:#a8b8cc;"></div><div style="left:47px;top:315.5px;height:15px;line-height:15px;font:normal 11px 'Liberation Sans';line-height:15px;letter-spacing:-0.095px;color:#000;white-space:pre;">Analog flag</div><div style="left:33px;top:331.0px;height:16px;line-height:16px;font:bold 12px 'Liberation Sans';line-height:16px;letter-spacing:-0.049px;color:#000;white-space:pre;">Network</div><div style="left:33px;top:347px;width:11px;height:16px;background:#ffd98e;"></div><svg style="left:33px;top:347px" width="11" height="16" viewBox="0 0 11 16" shape-rendering="crispEdges" ><path d="M1 4.500h9M5.500 1v5" stroke="#7a6624" fill="none"/></svg><div style="left:33px;top:352px;width:11px;height:11px;text-align:center;font:bold 8px/11px 'Liberation Mono';letter-spacing:-0.8px;color:#1a1408;">I</div><div style="left:31px;top:355px;width:1px;height:1px;background:#a8b8cc;"></div><div style="left:47px;top:347.5px;height:15px;line-height:15px;font:normal 11px 'Liberation Sans';line-height:15px;letter-spacing:-0.019px;color:#000;white-space:pre;">Network input</div><div style="left:33px;top:363px;width:11px;height:16px;background:#ffd98e;"></div><svg style="left:33px;top:363px" width="11" height="16" viewBox="0 0 11 16" shape-rendering="crispEdges" ><path d="M1 4.500h9M5.500 1v5" stroke="#7a6624" fill="none"/></svg><div style="left:33px;top:368px;width:11px;height:11px;text-align:center;font:bold 7px/11px 'Liberation Mono';letter-spacing:-0.8px;color:#1a1408;">AI</div><div style="left:31px;top:371px;width:1px;height:1px;background:#a8b8cc;"></div><div style="left:47px;top:363.5px;height:15px;line-height:15px;font:normal 11px 'Liberation Sans';line-height:15px;letter-spacing:-0.067px;color:#000;white-space:pre;">Network analog input</div><div style="left:33px;top:379px;width:11px;height:16px;background:#ffd98e;"></div><svg style="left:33px;top:379px" width="11" height="16" viewBox="0 0 11 16" shape-rendering="crispEdges" ><path d="M1 4.500h9M5.500 1v5" stroke="#7a6624" fill="none"/></svg><div style="left:33px;top:384px;width:11px;height:11px;text-align:center;font:bold 8px/11px 'Liberation Mono';letter-spacing:-0.8px;color:#1a1408;">Q</div><div style="left:31px;top:387px;width:1px;height:1px;background:#a8b8cc;"></div><div style="left:47px;top:379.5px;height:15px;line-height:15px;font:normal 11px 'Liberation Sans';line-height:15px;letter-spacing:0.073px;color:#000;white-space:pre;">Network output</div><div style="left:33px;top:395px;width:11px;height:16px;background:#ffd98e;"></div><svg style="left:33px;top:395px" width="11" height="16" viewBox="0 0 11 16" shape-rendering="crispEdges" ><path d="M1 4.500h9M5.500 1v5" stroke="#7a6624" fill="none"/></svg><div style="left:33px;top:400px;width:11px;height:11px;text-align:center;font:bold 7px/11px 'Liberation Mono';letter-spacing:-0.8px;color:#1a1408;">AQ</div><div style="left:31px;top:403px;width:1px;height:1px;background:#a8b8cc;"></div><div style="left:47px;top:395.5px;height:15px;line-height:15px;font:normal 11px 'Liberation Sans';line-height:15px;letter-spacing:-0.003px;color:#000;white-space:pre;">Network analog output</div><div style="left:15.660907451923084px;top:411.0px;height:16px;line-height:16px;font:bold 12px 'Liberation Sans';line-height:16px;letter-spacing:0.000px;color:#000;white-space:pre;letter-spacing:-0.501px;">Basic functions</div><div style="left:26.275390625px;top:427.5px;height:15px;line-height:15px;font:normal 11px 'Liberation Sans';line-height:15px;letter-spacing:0.000px;color:#000;white-space:pre;">AND</div><div style="left:25.203125px;top:443.5px;height:15px;line-height:15px;font:normal 11px 'Liberation Sans';line-height:15px;letter-spacing:0.000px;color:#000;white-space:pre;">AND (Edge)</div><div style="left:25.33154296875px;top:459.5px;height:15px;line-height:15px;font:normal 11px 'Liberation Sans';line-height:15px;letter-spacing:0.000px;color:#000;white-space:pre;">NAND</div><div style="left:24.25927734375px;top:475.5px;height:15px;line-height:15px;font:normal 11px 'Liberation Sans';line-height:15px;letter-spacing:0.000px;color:#000;white-space:pre;">NAND (Edge)</div><div style="left:27.0px;top:491.5px;height:15px;line-height:15px;font:normal 11px 'Liberation Sans';line-height:15px;letter-spacing:0.000px;color:#000;white-space:pre;">OR</div><div style="left:26.05615234375px;top:507.5px;height:15px;line-height:15px;font:normal 11px 'Liberation Sans';line-height:15px;letter-spacing:0.000px;color:#000;white-space:pre;">NOR</div><div style="left:25.6630859375px;top:523.5px;height:15px;line-height:15px;font:normal 11px 'Liberation Sans';line-height:15px;letter-spacing:0.000px;color:#000;white-space:pre;">XOR</div><div style="left:26.28076171875px;top:539.5px;height:15px;line-height:15px;font:normal 11px 'Liberation Sans';line-height:15px;letter-spacing:0.000px;color:#000;white-space:pre;">NOT</div><div style="left:16.067187500000006px;top:555.0px;height:16px;line-height:16px;font:bold 12px 'Liberation Sans';line-height:16px;letter-spacing:0.000px;color:#000;white-space:pre;letter-spacing:-0.401px;">Special functions</div><div style="left:34px;top:571.0px;height:16px;line-height:16px;font:bold 12px 'Liberation Sans';line-height:16px;letter-spacing:-0.092px;color:#000;white-space:pre;">Timer</div><div style="left:33px;top:587px;width:11px;height:16px;background:#ffd98e;"></div><svg style="left:33px;top:587px" width="12" height="16" viewBox="0 0 12 16" shape-rendering="crispEdges" ><path d="M2.500 10.500h2v-6h4v6h2M2.500 13.500h2v-2M8.500 11.500v2h2" fill="none" stroke="#b8902c"/></svg><div style="left:31px;top:595px;width:1px;height:1px;background:#a8b8cc;"></div><div style="left:47px;top:587.5px;height:15px;line-height:15px;font:normal 11px 'Liberation Sans';line-height:15px;letter-spacing:-0.182px;color:#000;white-space:pre;">On-Delay</div><div style="left:33px;top:603px;width:11px;height:16px;background:#ffd98e;"></div><svg style="left:33px;top:603px" width="12" height="16" viewBox="0 0 12 16" shape-rendering="crispEdges" ><path d="M2.500 5.500h2v-3M4.500 5.500h6M2.500 12.500h2v-5h4v5h2" fill="none" stroke="#b8902c"/></svg><div style="left:31px;top:611px;width:1px;height:1px;background:#a8b8cc;"></div><div style="left:47px;top:603.5px;height:15px;line-height:15px;font:normal 11px 'Liberation Sans';line-height:15px;letter-spacing:0.083px;color:#000;white-space:pre;">Off-Delay</div><div style="left:33px;top:619px;width:11px;height:16px;background:#ffd98e;"></div><svg style="left:33px;top:619px" width="12" height="16" viewBox="0 0 12 16" shape-rendering="crispEdges" ><path d="M2.500 10.500h2v-6h4v6h2M2.500 13.500h2v-2M8.500 11.500v2h2" fill="none" stroke="#b8902c"/></svg><div style="left:31px;top:627px;width:1px;height:1px;background:#a8b8cc;"></div><div style="left:47px;top:619.5px;height:15px;line-height:15px;font:normal 11px 'Liberation Sans';line-height:15px;letter-spacing:0.104px;color:#000;white-space:pre;">On-/Off-Delay</div><div style="left:33px;top:635px;width:11px;height:16px;background:#ffd98e;"></div><svg style="left:33px;top:635px" width="12" height="16" viewBox="0 0 12 16" shape-rendering="crispEdges" ><path d="M3.500 6.500h2v-4h2M2.500 8.500h8v5h-8zM5.500 8.500v3" fill="none" stroke="#b8902c"/></svg><div style="left:31px;top:643px;width:1px;height:1px;background:#a8b8cc;"></div><div style="left:47px;top:635.5px;height:15px;line-height:15px;font:normal 11px 'Liberation Sans';line-height:15px;letter-spacing:-0.055px;color:#000;white-space:pre;">Retentive On-Delay</div><div style="left:33px;top:651px;width:11px;height:16px;background:#fff;"></div><svg style="left:33px;top:651px" width="12" height="16" viewBox="0 0 12 16" shape-rendering="crispEdges" ><path d="M3.500 13v-2M3.500 9v-5h6v3" fill="none" stroke="#000"/></svg><div style="left:31px;top:659px;width:1px;height:1px;background:#a8b8cc;"></div><div style="left:47px;top:651.5px;height:15px;line-height:15px;font:normal 11px 'Liberation Sans';line-height:15px;letter-spacing:-0.031px;color:#000;white-space:pre;">Wiping relay (pulse output)</div><div style="left:33px;top:667px;width:11px;height:16px;background:#ffd98e;"></div><svg style="left:33px;top:667px" width="12" height="16" viewBox="0 0 12 16" shape-rendering="crispEdges" ><path d="M2.500 10.500h2v-6h4v6h2M2.500 13.500h2v-2M8.500 11.500v2h2" fill="none" stroke="#b8902c"/></svg><div style="left:31px;top:675px;width:1px;height:1px;background:#a8b8cc;"></div><div style="left:47px;top:667.5px;height:15px;line-height:15px;font:normal 11px 'Liberation Sans';line-height:15px;letter-spacing:-0.085px;color:#000;white-space:pre;">Edge triggered wiping relay</div><div style="left:33px;top:683px;width:11px;height:16px;background:#ffd98e;"></div><svg style="left:33px;top:683px" width="12" height="16" viewBox="0 0 12 16" shape-rendering="crispEdges" ><path d="M1.500 12.500v-5M3.500 12.500v-5M5.500 12.500v-5M7.500 12.500v-5M9.500 12.500v-5M1 12.500h10" fill="none" stroke="#b8902c"/></svg><div style="left:31px;top:691px;width:1px;height:1px;background:#a8b8cc;"></div><div style="left:47px;top:683.5px;height:15px;line-height:15px;font:normal 11px 'Liberation Sans';line-height:15px;letter-spacing:-0.174px;color:#000;white-space:pre;">Asynchronous Pulse Generator</div><div style="left:33px;top:699px;width:11px;height:16px;background:#ffd98e;"></div><svg style="left:33px;top:699px" width="12" height="16" viewBox="0 0 12 16" shape-rendering="crispEdges" ><path d="M2.500 10.500h2v-6h4v6h2M2.500 13.500h2v-2M8.500 11.500v2h2" fill="none" stroke="#b8902c"/></svg><div style="left:31px;top:707px;width:1px;height:1px;background:#a8b8cc;"></div><div style="left:47px;top:699.5px;height:15px;line-height:15px;font:normal 11px 'Liberation Sans';line-height:15px;letter-spacing:-0.198px;color:#000;white-space:pre;">Random Generator</div><div style="left:33px;top:715px;width:11px;height:16px;background:#ffd98e;"></div><svg style="left:33px;top:715px" width="12" height="16" viewBox="0 0 12 16" shape-rendering="crispEdges" ><path d="M2.500 5.500h2v-3M4.500 5.500h6M2.500 12.500h2v-5h4v5h2" fill="none" stroke="#b8902c"/></svg><div style="left:31px;top:723px;width:1px;height:1px;background:#a8b8cc;"></div><div style="left:47px;top:715.5px;height:15px;line-height:15px;font:normal 11px 'Liberation Sans';line-height:15px;letter-spacing:-0.071px;color:#000;white-space:pre;">Stairway lighting switch</div><div style="left:33px;top:731px;width:11px;height:16px;background:#ffd98e;"></div><svg style="left:33px;top:731px" width="12" height="16" viewBox="0 0 12 16" shape-rendering="crispEdges" ><path d="M2.500 5.500h2v-3h1v3h2v-3h1v3h2M2.500 13.500h2v-5h4v5h2" fill="none" stroke="#b8902c"/></svg><div style="left:31px;top:739px;width:1px;height:1px;background:#a8b8cc;"></div><div style="left:47px;top:731.5px;height:15px;line-height:15px;font:normal 11px 'Liberation Sans';line-height:15px;letter-spacing:-0.088px;color:#000;white-space:pre;">Multiple function switch</div><div style="left:33px;top:747px;width:11px;height:16px;background:#ffd98e;"></div><svg style="left:33px;top:747px" width="12" height="16" viewBox="0 0 12 16" shape-rendering="crispEdges" shape-rendering="geometricPrecision"><circle cx="6" cy="8" r="4" fill="none" stroke="#b8902c"/><path d="M6 5.500v3h2" fill="none" stroke="#b8902c"/></svg><div style="left:31px;top:755px;width:1px;height:1px;background:#a8b8cc;"></div><div style="left:47px;top:747.5px;height:15px;line-height:15px;font:normal 11px 'Liberation Sans';line-height:15px;letter-spacing:-0.218px;color:#000;white-space:pre;">Weekly Timer</div><div style="left:33px;top:763px;width:11px;height:16px;background:#ffd98e;"></div><div style="left:33px;top:764px;width:11px;height:7px;text-align:center;font:bold 6.5px/7px 'Liberation Sans';letter-spacing:-0.4px;color:#a07c1c;">MM</div><div style="left:33px;top:771px;width:11px;height:7px;text-align:center;font:bold 6.5px/7px 'Liberation Sans';letter-spacing:-0.4px;color:#a07c1c;">DD</div><div style="left:31px;top:771px;width:1px;height:1px;background:#a8b8cc;"></div><div style="left:47px;top:763.5px;height:15px;line-height:15px;font:normal 11px 'Liberation Sans';line-height:15px;letter-spacing:-0.160px;color:#000;white-space:pre;">Yearly Timer</div><div style="left:33px;top:779px;width:11px;height:16px;background:#ffd98e;"></div><div style="left:33px;top:780px;width:11px;height:7px;text-align:center;font:bold 6.5px/7px 'Liberation Sans';letter-spacing:-0.4px;color:#a07c1c;">✱o</div><div style="left:33px;top:787px;width:11px;height:7px;text-align:center;font:bold 6.5px/7px 'Liberation Sans';letter-spacing:-0.4px;color:#a07c1c;">AC</div><div style="left:31px;top:787px;width:1px;height:1px;background:#a8b8cc;"></div><div style="left:47px;top:779.5px;height:15px;line-height:15px;font:normal 11px 'Liberation Sans';line-height:15px;letter-spacing:-0.205px;color:#000;white-space:pre;">Astronomical clock</div><div style="left:33px;top:795px;width:11px;height:16px;background:#ffd98e;"></div><div style="left:33px;top:796px;width:11px;height:7px;text-align:center;font:bold 6.5px/7px 'Liberation Sans';letter-spacing:-0.4px;color:#a07c1c;">⊥o</div><div style="left:33px;top:803px;width:11px;height:7px;text-align:center;font:bold 6.5px/7px 'Liberation Sans';letter-spacing:-0.4px;color:#a07c1c;">SW</div><div style="left:31px;top:803px;width:1px;height:1px;background:#a8b8cc;"></div><div style="left:47px;top:795.5px;height:15px;line-height:15px;font:normal 11px 'Liberation Sans';line-height:15px;letter-spacing:-0.040px;color:#000;white-space:pre;">Stopwatch</div><div style="left:33px;top:811.0px;height:16px;line-height:16px;font:bold 12px 'Liberation Sans';line-height:16px;letter-spacing:-0.142px;color:#000;white-space:pre;">Counter</div><div style="left:33px;top:827px;width:11px;height:16px;background:#ffd98e;"></div><svg style="left:33px;top:827px" width="12" height="16" viewBox="0 0 12 16" shape-rendering="crispEdges" ><path d="M2 4.500h9M2.500 4v3M2 10.500h3M3.500 9v3M6 12.500l2-4M9 10.500h2.500" fill="none" stroke="#b8902c"/></svg><div style="left:31px;top:835px;width:1px;height:1px;background:#a8b8cc;"></div><div style="left:47px;top:827.5px;height:15px;line-height:15px;font:normal 11px 'Liberation Sans';line-height:15px;letter-spacing:-0.066px;color:#000;white-space:pre;">Up/Down counter</div><div style="left:33px;top:843px;width:11px;height:16px;background:#ffd98e;"></div><svg style="left:33px;top:843px" width="12" height="16" viewBox="0 0 12 16" shape-rendering="crispEdges" ><path d="M3.500 3v3M8.500 5v3M7 9.500h4" fill="none" stroke="#000"/></svg><div style="left:31px;top:851px;width:1px;height:1px;background:#a8b8cc;"></div><div style="left:47px;top:843.5px;height:15px;line-height:15px;font:normal 11px 'Liberation Sans';line-height:15px;letter-spacing:-0.118px;color:#000;white-space:pre;">Hours Counter</div><div style="left:33px;top:859px;width:11px;height:16px;background:#ffd98e;"></div><svg style="left:33px;top:859px" width="12" height="16" viewBox="0 0 12 16" shape-rendering="crispEdges" ><path d="M3.500 6.500l2.500-3l2.500 3M2.500 13.500h2v-5h4v5h2" fill="none" stroke="#b8902c"/></svg><div style="left:31px;top:867px;width:1px;height:1px;background:#a8b8cc;"></div><div style="left:47px;top:859.5px;height:15px;line-height:15px;font:normal 11px 'Liberation Sans';line-height:15px;letter-spacing:-0.068px;color:#000;white-space:pre;">Threshold trigger</div><div style="left:33px;top:875.0px;height:16px;line-height:16px;font:bold 12px 'Liberation Sans';line-height:16px;letter-spacing:-0.277px;color:#000;white-space:pre;">Analog</div><div style="left:33px;top:891px;width:11px;height:16px;background:#ffd98e;"></div><svg style="left:33px;top:891px" width="12" height="16" viewBox="0 0 12 16" shape-rendering="crispEdges" ><path d="M2 5.500h3M3.500 4v3M7 4.500h3M7 6.500h3M2 11.500h3M3.500 10v3M7 11.500h3M9 10l1.500 1.500l-1.500 1.500" fill="none" stroke="#b8902c"/></svg><div style="left:31px;top:899px;width:1px;height:1px;background:#a8b8cc;"></div><div style="left:47px;top:891.5px;height:15px;line-height:15px;font:normal 11px 'Liberation Sans';line-height:15px;letter-spacing:-0.093px;color:#000;white-space:pre;">Mathematic instruction</div><div style="left:33px;top:907px;width:11px;height:16px;background:#ffd98e;"></div><svg style="left:33px;top:907px" width="12" height="16" viewBox="0 0 12 16" shape-rendering="crispEdges" ><path d="M3 6l1.500-3l1.500 3M7 6l1.500-3l1.500 3M2 12.500h6v-4h2" fill="none" stroke="#b8902c"/></svg><div style="left:31px;top:915px;width:1px;height:1px;background:#a8b8cc;"></div><div style="left:47px;top:907.5px;height:15px;line-height:15px;font:normal 11px 'Liberation Sans';line-height:15px;letter-spacing:-0.140px;color:#000;white-space:pre;">Analog Comparator</div><div style="left:33px;top:923px;width:11px;height:16px;background:#ffd98e;"></div><svg style="left:33px;top:923px" width="12" height="16" viewBox="0 0 12 16" shape-rendering="crispEdges" ><path d="M3.500 6.500l2.500-3l2.500 3M2.500 13.500h2v-5h4v5h2" fill="none" stroke="#b8902c"/></svg><div style="left:31px;top:931px;width:1px;height:1px;background:#a8b8cc;"></div><div style="left:47px;top:923.5px;height:15px;line-height:15px;font:normal 11px 'Liberation Sans';line-height:15px;letter-spacing:-0.033px;color:#000;white-space:pre;">Analog threshold trigger</div><div style="left:33px;top:939px;width:11px;height:16px;background:#ffd98e;"></div><svg style="left:33px;top:939px" width="12" height="16" viewBox="0 0 12 16" shape-rendering="crispEdges" ><path d="M3 5.500h2M7 5.500h2M3 8.500h1M8 8.500h1M4 12.500h1M7 12.500h1M5 11.500h2" fill="none" stroke="#000"/></svg><div style="left:31px;top:947px;width:1px;height:1px;background:#a8b8cc;"></div><div style="left:47px;top:939.5px;height:15px;line-height:15px;font:normal 11px 'Liberation Sans';line-height:15px;letter-spacing:-0.193px;color:#000;white-space:pre;">Analog Amplifier</div></div></div>
<div style="left:232px;top:91px;width:17px;height:861px;background:linear-gradient(to right,#f3f1ec,#fefefb);"></div>
<div style="left:233px;top:92px;width:15px;height:15px;background:linear-gradient(135deg,#cddcfd 0,#c3d3fd 50%,#b0c4f4 100%);border:1px solid #fff;border-radius:2px;box-shadow:0 0 0 1px #b8c8ee inset;"></div>
<svg style="left:236px;top:96px" width="9" height="7" viewBox="0 0 9 7" shape-rendering="crispEdges" shape-rendering="geometricPrecision"><path d="M1 5.500l3.500-3.500l3.500 3.500" fill="none" stroke="#4d6185" stroke-width="2.500"/></svg>
<div style="left:233px;top:936px;width:15px;height:15px;background:linear-gradient(135deg,#cddcfd 0,#c3d3fd 50%,#b0c4f4 100%);border:1px solid #fff;border-radius:2px;box-shadow:0 0 0 1px #b8c8ee inset;"></div>
<svg style="left:236px;top:941px" width="9" height="7" viewBox="0 0 9 7" shape-rendering="crispEdges" shape-rendering="geometricPrecision"><path d="M1 1.500l3.500 3.500l3.500-3.500" fill="none" stroke="#4d6185" stroke-width="2.500"/></svg>
<div style="left:233px;top:108px;width:15px;height:600px;background:linear-gradient(to right,#c8d6fb 0,#c1d0fa 60%,#b4c6f2 100%);border:1px solid #fff;border-radius:2px;box-shadow:0 0 0 1px #b4c4ec inset;"></div>
<div style="left:237px;top:404px;width:7px;height:1px;background:#eef4fe;"></div>
<div style="left:238px;top:405px;width:7px;height:1px;background:#8ca4e8;"></div>
<div style="left:237px;top:406px;width:7px;height:1px;background:#eef4fe;"></div>
<div style="left:238px;top:407px;width:7px;height:1px;background:#8ca4e8;"></div>
<div style="left:237px;top:408px;width:7px;height:1px;background:#eef4fe;"></div>
<div style="left:238px;top:409px;width:7px;height:1px;background:#8ca4e8;"></div>
<div style="left:237px;top:410px;width:7px;height:1px;background:#eef4fe;"></div>
<div style="left:238px;top:411px;width:7px;height:1px;background:#8ca4e8;"></div>
<div style="left:31px;top:952px;width:201px;height:17px;background:linear-gradient(to bottom,#f3f1ec,#fefefb);"></div>
<div style="left:232px;top:952px;width:17px;height:17px;background:#ece9d8;"></div>
<div style="left:32px;top:953px;width:15px;height:15px;background:linear-gradient(135deg,#cddcfd 0,#c3d3fd 50%,#b0c4f4 100%);border:1px solid #fff;border-radius:2px;box-shadow:0 0 0 1px #b8c8ee inset;"></div>
<svg style="left:36px;top:956px" width="7" height="9" viewBox="0 0 7 9" shape-rendering="crispEdges" shape-rendering="geometricPrecision"><path d="M5.500 1l-3.500 3.500l3.500 3.500" fill="none" stroke="#4d6185" stroke-width="2.500"/></svg>
<div style="left:215px;top:953px;width:15px;height:15px;background:linear-gradient(135deg,#cddcfd 0,#c3d3fd 50%,#b0c4f4 100%);border:1px solid #fff;border-radius:2px;box-shadow:0 0 0 1px #b8c8ee inset;"></div>
<svg style="left:220px;top:956px" width="7" height="9" viewBox="0 0 7 9" shape-rendering="crispEdges" shape-rendering="geometricPrecision"><path d="M1.500 1l3.500 3.500l-3.500 3.500" fill="none" stroke="#4d6185" stroke-width="2.500"/></svg>
<div style="left:75px;top:953px;width:138px;height:15px;background:linear-gradient(to bottom,#c8d6fb 0,#c1d0fa 60%,#b4c6f2 100%);border:1px solid #fff;border-radius:2px;box-shadow:0 0 0 1px #b4c4ec inset;"></div>
<div style="left:140px;top:957px;width:1px;height:7px;background:#eef4fe;"></div>
<div style="left:141px;top:958px;width:1px;height:7px;background:#8cb0f8;"></div>
<div style="left:142px;top:957px;width:1px;height:7px;background:#eef4fe;"></div>
<div style="left:143px;top:958px;width:1px;height:7px;background:#8cb0f8;"></div>
<div style="left:144px;top:957px;width:1px;height:7px;background:#eef4fe;"></div>
<div style="left:145px;top:958px;width:1px;height:7px;background:#8cb0f8;"></div>
<div style="left:146px;top:957px;width:1px;height:7px;background:#eef4fe;"></div>
<div style="left:147px;top:958px;width:1px;height:7px;background:#8cb0f8;"></div>
<div style="left:249px;top:90px;width:6px;height:881px;background:linear-gradient(to right,#8c95a8 0,#6a6f7c 30%,#34353a 65%,#101010 100%);"></div>
<div style="left:4px;top:94px;width:16px;height:14px;background:linear-gradient(to bottom,#3e6ce8,#5a86f2);"></div>
<div style="left:8px;top:106px;width:8px;height:2px;background:#fff;"></div>
<svg style="left:11px;top:120px" width="12" height="18" viewBox="0 0 12 18" shape-rendering="crispEdges" shape-rendering="geometricPrecision"><path d="M1.500 0.500v13l3-3l2.500 6l2.500-1l-2.500-6h4z" fill="#fff" stroke="#000" stroke-width="1.200"/></svg>
<svg style="left:8px;top:149px" width="16" height="14" viewBox="0 0 16 14" shape-rendering="crispEdges" shape-rendering="geometricPrecision"><path d="M2.500 2v4.500h6v5h5M2.500 1.500l-2 2.500M2.500 1.500l2 2.500M13.500 12.500l-2-2.500M13.500 12.500l2-2.500M13.500 8v4" fill="none" stroke="#000" stroke-width="1.100"/></svg>
<div style="left:8px;top:175px;width:16px;height:16px;background:#ffdb8e;border:1px solid #000;"></div>
<div style="left:8px;top:177px;width:17px;height:15px;text-align:center;font:11px/15px 'Liberation Mono';letter-spacing:0.2px;">Co</div>
<div style="left:8px;top:202px;width:16px;height:16px;background:#ffdb8e;border:1px solid #000;"></div>
<div style="left:8px;top:204px;width:17px;height:15px;text-align:center;font:11px/15px 'Liberation Mono';letter-spacing:0.2px;">GF</div>
<div style="left:8px;top:229px;width:16px;height:16px;background:#ffdb8e;border:1px solid #000;"></div>
<div style="left:8px;top:231px;width:17px;height:15px;text-align:center;font:11px/15px 'Liberation Mono';letter-spacing:0.2px;">SF</div>
<div style="left:8px;top:256px;width:16px;height:16px;background:#ffdb8e;border:1px solid #000;"></div>
<div style="left:8px;top:256px;width:16px;height:16px;text-align:center;font:bold 12px/16px 'Liberation Sans';">L</div>
<div style="left:7px;top:277px;width:18px;height:22px;font:24px/22px 'Liberation Serif';">A</div>
<svg style="left:4px;top:280px" width="8" height="8" viewBox="0 0 8 8" shape-rendering="crispEdges" shape-rendering="geometricPrecision"><path d="M1 1l5 5M1 1h3.500M1 1v3.500" stroke="#000" stroke-width="1.400" fill="none"/></svg>
<svg style="left:8px;top:310px" width="18" height="15" viewBox="0 0 18 15" shape-rendering="crispEdges" shape-rendering="geometricPrecision"><path d="M0 7.500h12M3 14l9-7" stroke="#000" stroke-width="1.600" fill="none"/><circle cx="13.500" cy="3.500" r="2.300" fill="none" stroke="#101090" stroke-width="1.800"/><circle cx="14.500" cy="9.500" r="2.300" fill="none" stroke="#101090" stroke-width="1.800"/></svg>
<div style="left:2px;top:331px;width:20px;height:21px;background:#f6f4ec;border-top:1px solid #808080;border-left:1px solid #808080;border-right:1px solid #fff;border-bottom:1px solid #fff;"></div>
<div style="left:4px;top:334px;width:16px;height:16px;background:#ffdb8e;"></div>
<svg style="left:4px;top:334px" width="16" height="16" viewBox="0 0 16 16" shape-rendering="crispEdges" ><path d="M1.500 1.500h2v3h-2zM8.500 1.500h2v3h-2zM6.500 7.500h2v3h-2zM12.500 10.500h2v4h-2z" fill="none" stroke="#000"/><path d="M3.500 2.500h5M10.500 2.500h1.500M4.500 2.500v6h2M8.500 8.500h2v3.500h2" fill="none" stroke="#000"/><rect x="12.500" y="10.500" width="2" height="4" fill="none" stroke="#e00000"/></svg>
<svg style="left:5px;top:355px" width="17" height="16" viewBox="0 0 17 16" shape-rendering="crispEdges" shape-rendering="geometricPrecision"><rect x="6.500" y="0.500" width="8" height="7" fill="#20c8e8" stroke="#103060"/><rect x="4" y="8" width="12" height="2" fill="#203050"/><rect x="0.500" y="7.500" width="9" height="6" fill="#50b070" stroke="#506060"/><rect x="5" y="9" width="4" height="3" fill="#9098a0"/><rect x="0" y="14" width="11" height="1.500" fill="#606870"/><rect x="12" y="11" width="5" height="2" fill="#203050"/></svg>
<div style="left:-11.5px;top:925px;width:40px;height:16px;text-align:center;transform:rotate(-90deg);font:bold 13px/16px 'Liberation Sans';color:#fff;letter-spacing:-0.7px;">Tools</div>
<div style="left:0px;top:90px;width:1px;height:880px;background:linear-gradient(to bottom,#f4f2ea 0,#f4f2ea 240px,#dce4f4 500px,#d0dcf8 880px);"></div>
<svg style="left:2px;top:955px" width="16" height="16" viewBox="0 0 16 16" shape-rendering="crispEdges" shape-rendering="geometricPrecision"><path d="M2 2l11 12M13 2l-10 12" stroke="#000" stroke-width="1.800" fill="none"/><path d="M11 1l3 1l1 3l-3-1z" fill="#e8d020" stroke="#000" stroke-width="0.600"/><path d="M1 4q0-3 3-3l1 3z" fill="#303030"/></svg>
<div style="left:256px;top:101px;width:1022px;height:682px;background:#fff;border:1px solid #848c8e;"></div>
<div style="left:1277px;top:101px;width:1px;height:682px;background:#a5acb2;"></div>
<div style="left:256px;top:79px;width:111px;height:24px;background:#fff;border:1px solid #919b9c;border-bottom:none;border-radius:3px 3px 0 0;"></div>
<div style="left:256px;top:79px;width:111px;height:3px;background:linear-gradient(to bottom,#e68b2c,#ffc73c);border-radius:3px 3px 0 0;"></div>
<div style="left:257px;top:101px;width:109px;height:2px;background:#fff;"></div>
<div style="left:264px;top:83px;width:14px;height:14px;background:#ffdb8e;"></div>
<svg style="left:263px;top:82px" width="16" height="16" viewBox="0 0 16 16" shape-rendering="crispEdges" ><path d="M1.500 1.500h2v3h-2zM8.500 1.500h2v3h-2zM6.500 7.500h2v3h-2zM12.500 10.500h2v4h-2z" fill="none" stroke="#000"/><path d="M3.500 2.500h5M10.500 2.500h1.500M4.500 2.500v6h2M8.500 8.500h2v3.500h2" fill="none" stroke="#000"/><rect x="12.500" y="10.500" width="2" height="4" fill="none" stroke="#e00000"/></svg>
<div style="left:282px;top:83.0px;height:15px;line-height:15px;font:normal 11px 'Liberation Sans';line-height:15px;letter-spacing:-0.307px;color:#c8141e;white-space:pre;">Circuit Diagram1</div>
<div style="left:259px;top:105px;width:1000px;height:660px;background:#b3b3b3;border-left:1px solid #000;border-top:1px solid #7f8790;"></div>
<svg style="left:260px;top:106px" width="999" height="659" shape-rendering="crispEdges"><defs><pattern id="gd" x="14" y="0" width="15" height="15" patternUnits="userSpaceOnUse"><rect x="0" y="0" width="1" height="1" fill="#000"/></pattern></defs><rect width="999" height="659" fill="url(#gd)"/></svg>
<div style="left:357px;top:172px;width:39px;height:54px;background:#a9a9e4;"></div>
<div style="left:358px;top:173px;width:37px;height:52px;background:linear-gradient(to right,#ffdf96,#ffd885 60%,#ffdb8c);border:1px solid #0c0cb4;border-right:2px solid #0c0cb4;"></div>
<div style="left:367px;top:155.5px;height:16px;line-height:16px;font:normal 14px 'Liberation Sans';line-height:16px;letter-spacing:0.000px;color:#111;white-space:pre;">I1</div>
<div style="left:359px;top:187px;width:37px;height:18px;text-align:center;font:14px/18px 'Liberation Mono';color:#111;">I</div>
<div style="left:537px;top:292px;width:39px;height:60px;background:#a9a9e4;"></div>
<div style="left:538px;top:293px;width:37px;height:58px;background:linear-gradient(to right,#ffdf96,#ffd885 60%,#ffdb8c);border:1px solid #0c0cb4;border-right:2px solid #0c0cb4;"></div>
<div style="left:535px;top:275.5px;height:16px;line-height:16px;font:normal 14px 'Liberation Sans';line-height:16px;letter-spacing:0.076px;color:#111;white-space:pre;">B001</div>
<div style="left:529px;top:315px;width:9px;height:1px;background:#e02828;"></div>
<div style="left:529px;top:316px;width:9px;height:1px;background:#c89090;"></div>
<div style="left:529px;top:330px;width:9px;height:1px;background:#e02828;"></div>
<div style="left:529px;top:331px;width:9px;height:1px;background:#c89090;"></div>
<div style="left:529px;top:345px;width:9px;height:1px;background:#e02828;"></div>
<div style="left:529px;top:346px;width:9px;height:1px;background:#c89090;"></div>
<div style="left:551px;top:300px;width:12px;height:18px;font:12px/18px 'Liberation Sans';color:#111;">&amp;</div>
<svg style="left:560px;top:303px" width="10" height="12" viewBox="0 0 10 12" shape-rendering="crispEdges" shape-rendering="geometricPrecision"><path d="M5 0.500v9M1 5.500l4 4.500l4-4.500" fill="none" stroke="#000" stroke-width="1.800"/></svg>
<div style="left:732px;top:307px;width:39px;height:54px;background:#a9a9e4;"></div>
<div style="left:733px;top:308px;width:37px;height:52px;background:linear-gradient(to right,#ffdf96,#ffd885 60%,#ffdb8c);border:1px solid #0c0cb4;border-right:2px solid #0c0cb4;"></div>
<div style="left:730px;top:290.5px;height:16px;line-height:16px;font:normal 14px 'Liberation Sans';line-height:16px;letter-spacing:0.076px;color:#111;white-space:pre;">B002</div>
<div style="left:724px;top:330px;width:9px;height:1px;background:#0a0aa8;"></div>
<div style="left:724px;top:345px;width:9px;height:1px;background:#6e7c74;"></div>
<svg style="left:736px;top:311px" width="30" height="46" viewBox="0 0 30 46" shape-rendering="crispEdges" ><path d="M1.500 15.500h5v-12h4v12h18" fill="none" stroke="#111"/><path d="M1.500 34.500h5v-13h18v13h4" fill="none" stroke="#111"/><path d="M10.500 22v4M10.500 28v3M10.500 33v2" fill="none" stroke="#111"/></svg>
<div style="left:733px;top:360px;width:67px;height:26px;background:#ffffcc;"></div>
<div style="left:733px;top:364px;width:11px;height:20px;text-align:center;font:normal 15px/20px 'Liberation Sans';color:#111;">0</div>
<div style="left:744px;top:364px;width:11px;height:20px;text-align:center;font:normal 15px/20px 'Liberation Sans';color:#111;">0</div>
<div style="left:755px;top:364px;width:11px;height:20px;text-align:center;font:bold 15px/20px 'Liberation Sans';color:#111;">:</div>
<div style="left:766px;top:364px;width:11px;height:20px;text-align:center;font:normal 15px/20px 'Liberation Sans';color:#111;">0</div>
<div style="left:777px;top:364px;width:11px;height:20px;text-align:center;font:normal 15px/20px 'Liberation Sans';color:#111;">0</div>
<div style="left:788px;top:364px;width:11px;height:20px;text-align:center;font:normal 15px/20px 'Liberation Sans';color:#111;">s</div>
<div style="left:651px;top:348.0px;height:18px;line-height:18px;font:normal 15px 'Liberation Sans';line-height:18px;letter-spacing:-0.019px;color:#4a7c52;white-space:pre;">Rem = off</div>
<div style="left:651px;top:368.5px;height:18px;line-height:18px;font:normal 15px 'Liberation Sans';line-height:18px;letter-spacing:-0.257px;color:#4a7c52;white-space:pre;">04:00s+</div>
<div style="left:867px;top:202px;width:39px;height:60px;background:#a9a9e4;"></div>
<div style="left:868px;top:203px;width:37px;height:58px;background:linear-gradient(to right,#ffdf96,#ffd885 60%,#ffdb8c);border:1px solid #0c0cb4;border-right:2px solid #0c0cb4;"></div>
<div style="left:865px;top:185.5px;height:16px;line-height:16px;font:normal 14px 'Liberation Sans';line-height:16px;letter-spacing:0.076px;color:#111;white-space:pre;">B003</div>
<div style="left:859px;top:225px;width:9px;height:1px;background:#e02828;"></div>
<div style="left:859px;top:226px;width:9px;height:1px;background:#c89090;"></div>
<div style="left:859px;top:240px;width:9px;height:1px;background:#e02828;"></div>
<div style="left:859px;top:241px;width:9px;height:1px;background:#c89090;"></div>
<div style="left:884px;top:210px;width:12px;height:18px;font:12px/18px 'Liberation Sans';color:#111;">&amp;</div>
<div style="left:1077px;top:202px;width:39px;height:54px;background:#a9a9e4;"></div>
<div style="left:1078px;top:203px;width:37px;height:52px;background:linear-gradient(to right,#ffdf96,#ffd885 60%,#ffdb8c);border:1px solid #0c0cb4;border-right:2px solid #0c0cb4;"></div>
<div style="left:1083px;top:185.5px;height:16px;line-height:16px;font:normal 14px 'Liberation Sans';line-height:16px;letter-spacing:-0.338px;color:#111;white-space:pre;">Q1</div>
<div style="left:1078px;top:217px;width:38px;height:18px;text-align:center;font:14px/18px 'Liberation Mono';color:#111;">Q</div>
<div style="left:395px;top:194px;width:75px;height:1px;background:#a4a4f4;"></div>
<div style="left:395px;top:195px;width:75px;height:1px;background:#0a0aa8;"></div>
<div style="left:468px;top:195px;width:1px;height:106px;background:#a4a4f4;"></div>
<div style="left:469px;top:195px;width:1px;height:106px;background:#0a0aa8;"></div>
<div style="left:469px;top:211px;width:399px;height:1px;background:#a4a4f4;"></div>
<div style="left:469px;top:210px;width:399px;height:1px;background:#0a0aa8;"></div>
<div style="left:469px;top:299px;width:69px;height:1px;background:#a4a4f4;"></div>
<div style="left:469px;top:300px;width:69px;height:1px;background:#0a0aa8;"></div>
<div style="left:575px;top:314px;width:158px;height:1px;background:#a4a4f4;"></div>
<div style="left:575px;top:315px;width:158px;height:1px;background:#0a0aa8;"></div>
<div style="left:770px;top:329px;width:60px;height:1px;background:#a4a4f4;"></div>
<div style="left:770px;top:330px;width:60px;height:1px;background:#0a0aa8;"></div>
<div style="left:828px;top:255px;width:1px;height:76px;background:#a4a4f4;"></div>
<div style="left:829px;top:255px;width:1px;height:76px;background:#0a0aa8;"></div>
<div style="left:829px;top:254px;width:31px;height:1px;background:#a4a4f4;"></div>
<div style="left:829px;top:255px;width:31px;height:1px;background:#0a0aa8;"></div>
<div style="left:905px;top:224px;width:173px;height:1px;background:#a4a4f4;"></div>
<div style="left:905px;top:225px;width:173px;height:1px;background:#0a0aa8;"></div>
<div style="left:1115px;top:224px;width:9px;height:1px;background:#a4a4f4;"></div>
<div style="left:1115px;top:225px;width:9px;height:1px;background:#0a0aa8;"></div>
<div style="left:714px;top:305.0px;height:12px;line-height:12px;font:normal 10px 'Liberation Sans';line-height:12px;letter-spacing:-0.543px;color:#000;white-space:pre;">Trg</div>
<div style="left:721.5px;top:320.0px;height:12px;line-height:12px;font:normal 10px 'Liberation Sans';line-height:12px;letter-spacing:0.000px;color:#000;white-space:pre;">R</div>
<div style="left:721px;top:335.0px;height:12px;line-height:12px;font:normal 10px 'Liberation Sans';line-height:12px;letter-spacing:0.000px;color:#000;white-space:pre;">T</div>
<svg style="left:463px;top:204px" width="13" height="13" viewBox="0 0 13 13" shape-rendering="crispEdges" shape-rendering="geometricPrecision"><circle cx="6.500" cy="6.500" r="5.600" fill="#000"/></svg>
<div style="left:469px;top:205px;width:1px;height:11px;background:#0a0a78;"></div>
<svg style="left:573px;top:310px" width="11" height="11" viewBox="0 0 11 11" shape-rendering="crispEdges" shape-rendering="geometricPrecision"><circle cx="5.500" cy="5.500" r="4.600" fill="#0808f8"/></svg>
<svg style="left:858px;top:250px" width="11" height="11" viewBox="0 0 11 11" shape-rendering="crispEdges" shape-rendering="geometricPrecision"><circle cx="5.500" cy="5.500" r="4.600" fill="#f80808"/></svg>
<div style="left:1259px;top:105px;width:17px;height:660px;background:linear-gradient(to right,#f3f1ec,#fefefb);"></div>
<div style="left:1260px;top:106px;width:15px;height:15px;background:linear-gradient(135deg,#cddcfd 0,#c3d3fd 50%,#b0c4f4 100%);border:1px solid #fff;border-radius:2px;box-shadow:0 0 0 1px #b8c8ee inset;"></div>
<svg style="left:1263px;top:110px" width="9" height="7" viewBox="0 0 9 7" shape-rendering="crispEdges" shape-rendering="geometricPrecision"><path d="M1 5.500l3.500-3.500l3.500 3.500" fill="none" stroke="#4d6185" stroke-width="2.500"/></svg>
<div style="left:1260px;top:749px;width:15px;height:15px;background:linear-gradient(135deg,#cddcfd 0,#c3d3fd 50%,#b0c4f4 100%);border:1px solid #fff;border-radius:2px;box-shadow:0 0 0 1px #b8c8ee inset;"></div>
<svg style="left:1263px;top:754px" width="9" height="7" viewBox="0 0 9 7" shape-rendering="crispEdges" shape-rendering="geometricPrecision"><path d="M1 1.500l3.500 3.500l3.500-3.500" fill="none" stroke="#4d6185" stroke-width="2.500"/></svg>
<div style="left:1260px;top:167px;width:15px;height:267px;background:linear-gradient(to right,#c8d6fb 0,#c1d0fa 60%,#b4c6f2 100%);border:1px solid #fff;border-radius:2px;box-shadow:0 0 0 1px #b4c4ec inset;"></div>
<div style="left:259px;top:765px;width:1000px;height:17px;background:linear-gradient(to bottom,#f3f1ec,#fefefb);"></div>
<div style="left:1259px;top:765px;width:17px;height:17px;background:#ece9d8;"></div>
<div style="left:260px;top:766px;width:15px;height:15px;background:linear-gradient(135deg,#cddcfd 0,#c3d3fd 50%,#b0c4f4 100%);border:1px solid #fff;border-radius:2px;box-shadow:0 0 0 1px #b8c8ee inset;"></div>
<svg style="left:264px;top:769px" width="7" height="9" viewBox="0 0 7 9" shape-rendering="crispEdges" shape-rendering="geometricPrecision"><path d="M5.500 1l-3.500 3.500l3.500 3.500" fill="none" stroke="#4d6185" stroke-width="2.500"/></svg>
<div style="left:1243px;top:766px;width:15px;height:15px;background:linear-gradient(135deg,#cddcfd 0,#c3d3fd 50%,#b0c4f4 100%);border:1px solid #fff;border-radius:2px;box-shadow:0 0 0 1px #b8c8ee inset;"></div>
<svg style="left:1248px;top:769px" width="7" height="9" viewBox="0 0 7 9" shape-rendering="crispEdges" shape-rendering="geometricPrecision"><path d="M1.500 1l3.500 3.500l-3.500 3.500" fill="none" stroke="#4d6185" stroke-width="2.500"/></svg>
<div style="left:276px;top:766px;width:411px;height:15px;background:linear-gradient(to bottom,#c8d6fb 0,#c1d0fa 60%,#b4c6f2 100%);border:1px solid #fff;border-radius:2px;box-shadow:0 0 0 1px #b4c4ec inset;"></div>
<div style="left:477px;top:770px;width:1px;height:7px;background:#eef4fe;"></div>
<div style="left:478px;top:771px;width:1px;height:7px;background:#8cb0f8;"></div>
<div style="left:479px;top:770px;width:1px;height:7px;background:#eef4fe;"></div>
<div style="left:480px;top:771px;width:1px;height:7px;background:#8cb0f8;"></div>
<div style="left:481px;top:770px;width:1px;height:7px;background:#eef4fe;"></div>
<div style="left:482px;top:771px;width:1px;height:7px;background:#8cb0f8;"></div>
<div style="left:483px;top:770px;width:1px;height:7px;background:#eef4fe;"></div>
<div style="left:484px;top:771px;width:1px;height:7px;background:#8cb0f8;"></div>
<div style="left:266px;top:797px;width:2px;height:2px;background:#b4b1a0;"></div>
<div style="left:267px;top:798px;width:2px;height:2px;background:#fff;"></div>
<div style="left:267px;top:798px;width:1px;height:1px;background:#c8c5b4;"></div>
<div style="left:266px;top:801px;width:2px;height:2px;background:#b4b1a0;"></div>
<div style="left:267px;top:802px;width:2px;height:2px;background:#fff;"></div>
<div style="left:267px;top:802px;width:1px;height:1px;background:#c8c5b4;"></div>
<div style="left:266px;top:805px;width:2px;height:2px;background:#b4b1a0;"></div>
<div style="left:267px;top:806px;width:2px;height:2px;background:#fff;"></div>
<div style="left:267px;top:806px;width:1px;height:1px;background:#c8c5b4;"></div>
<div style="left:266px;top:809px;width:2px;height:2px;background:#b4b1a0;"></div>
<div style="left:267px;top:810px;width:2px;height:2px;background:#fff;"></div>
<div style="left:267px;top:810px;width:1px;height:1px;background:#c8c5b4;"></div>
<div style="left:266px;top:813px;width:2px;height:2px;background:#b4b1a0;"></div>
<div style="left:267px;top:814px;width:2px;height:2px;background:#fff;"></div>
<div style="left:267px;top:814px;width:1px;height:1px;background:#c8c5b4;"></div>
<div style="left:266px;top:817px;width:2px;height:2px;background:#b4b1a0;"></div>
<div style="left:267px;top:818px;width:2px;height:2px;background:#fff;"></div>
<div style="left:267px;top:818px;width:1px;height:1px;background:#c8c5b4;"></div>
<div style="left:266px;top:821px;width:2px;height:2px;background:#b4b1a0;"></div>
<div style="left:267px;top:822px;width:2px;height:2px;background:#fff;"></div>
<div style="left:267px;top:822px;width:1px;height:1px;background:#c8c5b4;"></div>
<div style="left:266px;top:825px;width:2px;height:2px;background:#b4b1a0;"></div>
<div style="left:267px;top:826px;width:2px;height:2px;background:#fff;"></div>
<div style="left:267px;top:826px;width:1px;height:1px;background:#c8c5b4;"></div>
<div style="left:266px;top:829px;width:2px;height:2px;background:#b4b1a0;"></div>
<div style="left:267px;top:830px;width:2px;height:2px;background:#fff;"></div>
<div style="left:267px;top:830px;width:1px;height:1px;background:#c8c5b4;"></div>
<div style="left:266px;top:833px;width:2px;height:2px;background:#b4b1a0;"></div>
<div style="left:267px;top:834px;width:2px;height:2px;background:#fff;"></div>
<div style="left:267px;top:834px;width:1px;height:1px;background:#c8c5b4;"></div>
<div style="left:266px;top:837px;width:2px;height:2px;background:#b4b1a0;"></div>
<div style="left:267px;top:838px;width:2px;height:2px;background:#fff;"></div>
<div style="left:267px;top:838px;width:1px;height:1px;background:#c8c5b4;"></div>
<div style="left:326px;top:797px;width:2px;height:2px;background:#b4b1a0;"></div>
<div style="left:327px;top:798px;width:2px;height:2px;background:#fff;"></div>
<div style="left:327px;top:798px;width:1px;height:1px;background:#c8c5b4;"></div>
<div style="left:326px;top:801px;width:2px;height:2px;background:#b4b1a0;"></div>
<div style="left:327px;top:802px;width:2px;height:2px;background:#fff;"></div>
<div style="left:327px;top:802px;width:1px;height:1px;background:#c8c5b4;"></div>
<div style="left:326px;top:805px;width:2px;height:2px;background:#b4b1a0;"></div>
<div style="left:327px;top:806px;width:2px;height:2px;background:#fff;"></div>
<div style="left:327px;top:806px;width:1px;height:1px;background:#c8c5b4;"></div>
<div style="left:326px;top:809px;width:2px;height:2px;background:#b4b1a0;"></div>
<div style="left:327px;top:810px;width:2px;height:2px;background:#fff;"></div>
<div style="left:327px;top:810px;width:1px;height:1px;background:#c8c5b4;"></div>
<div style="left:326px;top:813px;width:2px;height:2px;background:#b4b1a0;"></div>
<div style="left:327px;top:814px;width:2px;height:2px;background:#fff;"></div>
<div style="left:327px;top:814px;width:1px;height:1px;background:#c8c5b4;"></div>
<div style="left:326px;top:817px;width:2px;height:2px;background:#b4b1a0;"></div>
<div style="left:327px;top:818px;width:2px;height:2px;background:#fff;"></div>
<div style="left:327px;top:818px;width:1px;height:1px;background:#c8c5b4;"></div>
<div style="left:326px;top:821px;width:2px;height:2px;background:#b4b1a0;"></div>
<div style="left:327px;top:822px;width:2px;height:2px;background:#fff;"></div>
<div style="left:327px;top:822px;width:1px;height:1px;background:#c8c5b4;"></div>
<div style="left:326px;top:825px;width:2px;height:2px;background:#b4b1a0;"></div>
<div style="left:327px;top:826px;width:2px;height:2px;background:#fff;"></div>
<div style="left:327px;top:826px;width:1px;height:1px;background:#c8c5b4;"></div>
<div style="left:326px;top:829px;width:2px;height:2px;background:#b4b1a0;"></div>
<div style="left:327px;top:830px;width:2px;height:2px;background:#fff;"></div>
<div style="left:327px;top:830px;width:1px;height:1px;background:#c8c5b4;"></div>
<div style="left:326px;top:833px;width:2px;height:2px;background:#b4b1a0;"></div>
<div style="left:327px;top:834px;width:2px;height:2px;background:#fff;"></div>
<div style="left:327px;top:834px;width:1px;height:1px;background:#c8c5b4;"></div>
<div style="left:326px;top:837px;width:2px;height:2px;background:#b4b1a0;"></div>
<div style="left:327px;top:838px;width:2px;height:2px;background:#fff;"></div>
<div style="left:327px;top:838px;width:1px;height:1px;background:#c8c5b4;"></div>
<div style="left:389px;top:806px;width:2px;height:2px;background:#b4b1a0;"></div>
<div style="left:390px;top:807px;width:2px;height:2px;background:#fff;"></div>
<div style="left:390px;top:807px;width:1px;height:1px;background:#c8c5b4;"></div>
<div style="left:389px;top:810px;width:2px;height:2px;background:#b4b1a0;"></div>
<div style="left:390px;top:811px;width:2px;height:2px;background:#fff;"></div>
<div style="left:390px;top:811px;width:1px;height:1px;background:#c8c5b4;"></div>
<div style="left:389px;top:814px;width:2px;height:2px;background:#b4b1a0;"></div>
<div style="left:390px;top:815px;width:2px;height:2px;background:#fff;"></div>
<div style="left:390px;top:815px;width:1px;height:1px;background:#c8c5b4;"></div>
<div style="left:389px;top:818px;width:2px;height:2px;background:#b4b1a0;"></div>
<div style="left:390px;top:819px;width:2px;height:2px;background:#fff;"></div>
<div style="left:390px;top:819px;width:1px;height:1px;background:#c8c5b4;"></div>
<div style="left:389px;top:822px;width:2px;height:2px;background:#b4b1a0;"></div>
<div style="left:390px;top:823px;width:2px;height:2px;background:#fff;"></div>
<div style="left:390px;top:823px;width:1px;height:1px;background:#c8c5b4;"></div>
<div style="left:389px;top:826px;width:2px;height:2px;background:#b4b1a0;"></div>
<div style="left:390px;top:827px;width:2px;height:2px;background:#fff;"></div>
<div style="left:390px;top:827px;width:1px;height:1px;background:#c8c5b4;"></div>
<div style="left:389px;top:830px;width:2px;height:2px;background:#b4b1a0;"></div>
<div style="left:390px;top:831px;width:2px;height:2px;background:#fff;"></div>
<div style="left:390px;top:831px;width:1px;height:1px;background:#c8c5b4;"></div>
<div style="left:278px;top:807px;font:bold 13px/18px 'Liberation Sans';color:#000;transform:scaleX(1.3);transform-origin:0 0;">«</div>
<div style="left:338px;top:807px;font:bold 13px/18px 'Liberation Sans';color:#000;transform:scaleX(1.3);transform-origin:0 0;">«</div>
<div style="left:290px;top:796px;width:26px;height:43px;background:#ece9d8;border-top:1px solid #fff;border-left:1px solid #fff;border-right:1px solid #808078;border-bottom:1px solid #808078;box-shadow:1px 1px 0 #b0ad9c;"></div>
<div style="left:292px;top:798px;width:23px;height:25px;background:#008484;"></div>
<svg style="left:292px;top:798px" width="23" height="25" viewBox="0 0 23 25" shape-rendering="crispEdges" shape-rendering="geometricPrecision"><path d="M10 1v6M10 14v10" fill="none" stroke="#000" stroke-width="2"/><path d="M10 14l4-7" fill="none" stroke="#000" stroke-width="1.600"/><path d="M12.500 11l2.500 2l2.500-2.500l2.500 1" fill="none" stroke="#000" stroke-width="1.300"/></svg>
<div style="left:290px;top:823px;width:25px;height:15px;text-align:center;font:12px/15px 'Liberation Serif';color:#000;">I1</div>
<div style="left:350px;top:796px;width:29px;height:2px;background:#9a9a9a;"></div>
<div style="left:350px;top:798px;width:29px;height:29px;background:#000;"></div>
<svg style="left:350px;top:798px" width="29" height="29" viewBox="0 0 29 29" shape-rendering="crispEdges" shape-rendering="geometricPrecision"><path d="M14.500 4q-5.500 0-5.500 5.500q0 3 2.500 6l1 7h4l1-7q2.500-3 2.500-6q0-5.500-5.500-5.500z" fill="#fff"/><path d="M13.500 12l1 4l1-4" stroke="#888" stroke-width="0.800" fill="none"/></svg>
<div style="left:349px;top:827px;width:29px;height:15px;text-align:center;font:12px/15px 'Liberation Serif';color:#000;">Q1</div>
<svg style="left:402px;top:807px" width="22" height="19" viewBox="0 0 22 19" shape-rendering="crispEdges" shape-rendering="geometricPrecision"><path d="M6.500 2.500l14 15" stroke="#000" stroke-width="1.100"/><path d="M9 6.500q2.500-2.500 6.500 0.500q3.500 3.500 1.500 6q-3 2-6.500-0.500q-3.500-3.500-1.500-6z" fill="#9cb8c4" stroke="#203840" stroke-width="1"/><path d="M10 11l6-3" stroke="#e0ecf0" stroke-width="0.800"/><circle cx="4" cy="13.500" r="2.700" fill="#60d830"/></svg>
<svg style="left:435px;top:811px" width="14" height="12" viewBox="0 0 14 12" shape-rendering="crispEdges" shape-rendering="geometricPrecision"><path d="M0.500 0.500l13 5.500l-13 5.500z" fill="#9a9a9a" stroke="#888"/></svg>
<div style="left:460px;top:812px;width:11px;height:11px;background:#d83030;border:1px solid #a82828;"></div>
<div style="left:484px;top:812px;width:4px;height:11px;background:#fcc038;border:1px solid #d08818;"></div>
<div style="left:489px;top:812px;width:4px;height:11px;background:#fcc038;border:1px solid #d08818;"></div>
<svg style="left:513px;top:811px" width="16" height="13" viewBox="0 0 16 13" shape-rendering="crispEdges" shape-rendering="geometricPrecision"><path d="M1 8v-3q0-3 3-3h5v-2l5 4l-5 4v-2h-4v4z" fill="#9a9a9a"/><rect x="7" y="10" width="4" height="2" fill="#808080"/></svg>
<div style="left:533px;top:807px;width:46px;height:20px;background:#ece9d8;border:1px solid #a0a098;"></div>
<div style="left:568px;top:809.5px;height:15px;line-height:15px;font:normal 11px 'Liberation Sans';line-height:15px;letter-spacing:0.000px;color:#a8a598;white-space:pre;">1</div>
<div style="left:579px;top:807px;width:56px;height:20px;background:#f6f5ee;border:1px solid #fff;box-shadow:0 0 0 1px #d8d5c4 inset;"></div>
<div style="left:583px;top:809.5px;height:15px;line-height:15px;font:normal 11px 'Liberation Sans';line-height:15px;letter-spacing:-0.501px;color:#a8a598;white-space:pre;">Cycles</div>
<div style="left:617px;top:809px;width:16px;height:16px;background:#e4e2d6;border:1px solid #f8f7f2;border-radius:2px;"></div>
<svg style="left:621px;top:814px" width="9" height="7" viewBox="0 0 9 7" shape-rendering="crispEdges" shape-rendering="geometricPrecision"><path d="M1 1.500l3.500 3.500l3.500-3.500" fill="none" stroke="#c0beb0" stroke-width="2"/></svg>
<div style="left:643px;top:809.0px;height:16px;line-height:16px;font:bold 13px 'Liberation Serif';line-height:16px;letter-spacing:0.007px;color:#000;white-space:pre;">11:35:58</div>
<svg style="left:695px;top:811px" width="14" height="12" viewBox="0 0 14 12" shape-rendering="crispEdges" shape-rendering="geometricPrecision"><circle cx="7" cy="6" r="5.300" fill="#fff" stroke="#c82828" stroke-width="1.400"/><path d="M6.500 3v3.500h3" fill="none" stroke="#000" stroke-width="1.200"/></svg>
<div style="left:716px;top:809px;width:16px;height:16px;background:#a8a8a8;"></div>
<svg style="left:716px;top:809px" width="16" height="16" viewBox="0 0 16 16" shape-rendering="crispEdges" ><path d="M7 1v7M4 8h8M4 8v4M12 8v4M8 8v6" stroke="#989898" stroke-width="1.500" fill="none"/></svg>
<svg style="left:738px;top:810px" width="16" height="16" viewBox="0 0 16 16" shape-rendering="crispEdges" ><rect x="0.500" y="0.500" width="15" height="15" fill="#fff" stroke="#101060"/><rect x="0" y="0" width="16" height="4" fill="#101060"/><path d="M1 6.500h14M1 9.500h14M1 12.500h14M4.500 4v11M8.500 4v11M12.500 4v11" stroke="#101060"/></svg>
<div style="left:260px;top:849px;width:2px;height:2px;background:#b4b1a0;"></div>
<div style="left:261px;top:850px;width:2px;height:2px;background:#fff;"></div>
<div style="left:261px;top:850px;width:1px;height:1px;background:#c8c5b4;"></div>
<div style="left:260px;top:853px;width:2px;height:2px;background:#b4b1a0;"></div>
<div style="left:261px;top:854px;width:2px;height:2px;background:#fff;"></div>
<div style="left:261px;top:854px;width:1px;height:1px;background:#c8c5b4;"></div>
<div style="left:260px;top:857px;width:2px;height:2px;background:#b4b1a0;"></div>
<div style="left:261px;top:858px;width:2px;height:2px;background:#fff;"></div>
<div style="left:261px;top:858px;width:1px;height:1px;background:#c8c5b4;"></div>
<div style="left:260px;top:861px;width:2px;height:2px;background:#b4b1a0;"></div>
<div style="left:261px;top:862px;width:2px;height:2px;background:#fff;"></div>
<div style="left:261px;top:862px;width:1px;height:1px;background:#c8c5b4;"></div>
<div style="left:260px;top:865px;width:2px;height:2px;background:#b4b1a0;"></div>
<div style="left:261px;top:866px;width:2px;height:2px;background:#fff;"></div>
<div style="left:261px;top:866px;width:1px;height:1px;background:#c8c5b4;"></div>
<div style="left:260px;top:869px;width:2px;height:2px;background:#b4b1a0;"></div>
<div style="left:261px;top:870px;width:2px;height:2px;background:#fff;"></div>
<div style="left:261px;top:870px;width:1px;height:1px;background:#c8c5b4;"></div>
<div style="left:260px;top:873px;width:2px;height:2px;background:#b4b1a0;"></div>
<div style="left:261px;top:874px;width:2px;height:2px;background:#fff;"></div>
<div style="left:261px;top:874px;width:1px;height:1px;background:#c8c5b4;"></div>
<div style="left:260px;top:877px;width:2px;height:2px;background:#b4b1a0;"></div>
<div style="left:261px;top:878px;width:2px;height:2px;background:#fff;"></div>
<div style="left:261px;top:878px;width:1px;height:1px;background:#c8c5b4;"></div>
<div style="left:260px;top:881px;width:2px;height:2px;background:#b4b1a0;"></div>
<div style="left:261px;top:882px;width:2px;height:2px;background:#fff;"></div>
<div style="left:261px;top:882px;width:1px;height:1px;background:#c8c5b4;"></div>
<div style="left:260px;top:885px;width:2px;height:2px;background:#b4b1a0;"></div>
<div style="left:261px;top:886px;width:2px;height:2px;background:#fff;"></div>
<div style="left:261px;top:886px;width:1px;height:1px;background:#c8c5b4;"></div>
<div style="left:260px;top:889px;width:2px;height:2px;background:#b4b1a0;"></div>
<div style="left:261px;top:890px;width:2px;height:2px;background:#fff;"></div>
<div style="left:261px;top:890px;width:1px;height:1px;background:#c8c5b4;"></div>
<div style="left:260px;top:893px;width:2px;height:2px;background:#b4b1a0;"></div>
<div style="left:261px;top:894px;width:2px;height:2px;background:#fff;"></div>
<div style="left:261px;top:894px;width:1px;height:1px;background:#c8c5b4;"></div>
<div style="left:260px;top:897px;width:2px;height:2px;background:#b4b1a0;"></div>
<div style="left:261px;top:898px;width:2px;height:2px;background:#fff;"></div>
<div style="left:261px;top:898px;width:1px;height:1px;background:#c8c5b4;"></div>
<div style="left:260px;top:901px;width:2px;height:2px;background:#b4b1a0;"></div>
<div style="left:261px;top:902px;width:2px;height:2px;background:#fff;"></div>
<div style="left:261px;top:902px;width:1px;height:1px;background:#c8c5b4;"></div>
<div style="left:260px;top:905px;width:2px;height:2px;background:#b4b1a0;"></div>
<div style="left:261px;top:906px;width:2px;height:2px;background:#fff;"></div>
<div style="left:261px;top:906px;width:1px;height:1px;background:#c8c5b4;"></div>
<div style="left:260px;top:909px;width:2px;height:2px;background:#b4b1a0;"></div>
<div style="left:261px;top:910px;width:2px;height:2px;background:#fff;"></div>
<div style="left:261px;top:910px;width:1px;height:1px;background:#c8c5b4;"></div>
<div style="left:260px;top:913px;width:2px;height:2px;background:#b4b1a0;"></div>
<div style="left:261px;top:914px;width:2px;height:2px;background:#fff;"></div>
<div style="left:261px;top:914px;width:1px;height:1px;background:#c8c5b4;"></div>
<div style="left:260px;top:917px;width:2px;height:2px;background:#b4b1a0;"></div>
<div style="left:261px;top:918px;width:2px;height:2px;background:#fff;"></div>
<div style="left:261px;top:918px;width:1px;height:1px;background:#c8c5b4;"></div>
<div style="left:260px;top:921px;width:2px;height:2px;background:#b4b1a0;"></div>
<div style="left:261px;top:922px;width:2px;height:2px;background:#fff;"></div>
<div style="left:261px;top:922px;width:1px;height:1px;background:#c8c5b4;"></div>
<div style="left:260px;top:925px;width:2px;height:2px;background:#b4b1a0;"></div>
<div style="left:261px;top:926px;width:2px;height:2px;background:#fff;"></div>
<div style="left:261px;top:926px;width:1px;height:1px;background:#c8c5b4;"></div>
<div style="left:260px;top:929px;width:2px;height:2px;background:#b4b1a0;"></div>
<div style="left:261px;top:930px;width:2px;height:2px;background:#fff;"></div>
<div style="left:261px;top:930px;width:1px;height:1px;background:#c8c5b4;"></div>
<div style="left:260px;top:933px;width:2px;height:2px;background:#b4b1a0;"></div>
<div style="left:261px;top:934px;width:2px;height:2px;background:#fff;"></div>
<div style="left:261px;top:934px;width:1px;height:1px;background:#c8c5b4;"></div>
<div style="left:260px;top:937px;width:2px;height:2px;background:#b4b1a0;"></div>
<div style="left:261px;top:938px;width:2px;height:2px;background:#fff;"></div>
<div style="left:261px;top:938px;width:1px;height:1px;background:#c8c5b4;"></div>
<div style="left:260px;top:941px;width:2px;height:2px;background:#b4b1a0;"></div>
<div style="left:261px;top:942px;width:2px;height:2px;background:#fff;"></div>
<div style="left:261px;top:942px;width:1px;height:1px;background:#c8c5b4;"></div>
<div style="left:260px;top:945px;width:2px;height:2px;background:#b4b1a0;"></div>
<div style="left:261px;top:946px;width:2px;height:2px;background:#fff;"></div>
<div style="left:261px;top:946px;width:1px;height:1px;background:#c8c5b4;"></div>
<div style="left:260px;top:949px;width:2px;height:2px;background:#b4b1a0;"></div>
<div style="left:261px;top:950px;width:2px;height:2px;background:#fff;"></div>
<div style="left:261px;top:950px;width:1px;height:1px;background:#c8c5b4;"></div>
<div style="left:260px;top:953px;width:2px;height:2px;background:#b4b1a0;"></div>
<div style="left:261px;top:954px;width:2px;height:2px;background:#fff;"></div>
<div style="left:261px;top:954px;width:1px;height:1px;background:#c8c5b4;"></div>
<div style="left:260px;top:957px;width:2px;height:2px;background:#b4b1a0;"></div>
<div style="left:261px;top:958px;width:2px;height:2px;background:#fff;"></div>
<div style="left:261px;top:958px;width:1px;height:1px;background:#c8c5b4;"></div>
<div style="left:260px;top:961px;width:2px;height:2px;background:#b4b1a0;"></div>
<div style="left:261px;top:962px;width:2px;height:2px;background:#fff;"></div>
<div style="left:261px;top:962px;width:1px;height:1px;background:#c8c5b4;"></div>
<div style="left:260px;top:965px;width:2px;height:2px;background:#b4b1a0;"></div>
<div style="left:261px;top:966px;width:2px;height:2px;background:#fff;"></div>
<div style="left:261px;top:966px;width:1px;height:1px;background:#c8c5b4;"></div>
<div style="left:268px;top:845px;width:1011px;height:5px;background:linear-gradient(to bottom,#8a8a80 0,#3a3a36 35%,#0c0c0c 80%,#000 100%);"></div>
<div style="left:268px;top:850px;width:1011px;height:20px;background:linear-gradient(to right,#2b62d8 0,#2c63d9 26%,#5480de 42%,#88a4e0 56%,#bac8de 70%,#e0e1da 80%,#ece9d8 85%);"></div>
<svg style="left:271px;top:853px" width="11" height="13" viewBox="0 0 11 13" shape-rendering="crispEdges" shape-rendering="geometricPrecision"><path d="M0.500 0.500h6.500l3.500 3.500v8.500h-10z" fill="#fff" stroke="#10104a"/></svg>
<div style="left:288px;top:849.5px;height:16px;line-height:16px;font:bold 13px 'Liberation Sans';line-height:16px;letter-spacing:0.169px;color:#fff;white-space:pre;">Info Window</div>
<div style="left:268px;top:870px;width:1011px;height:100px;background:#fff;border:1px solid #9aa8bc;"></div>
<div style="left:1184px;top:851px;width:17px;height:18px;background:#eef0f4;border:1.500px solid #182060;border-radius:4px;"></div>
<svg style="left:1186px;top:853px" width="14" height="14" viewBox="0 0 14 14" shape-rendering="crispEdges" ><path d="M0.500 0.500h5l2 2v6h-7z" fill="#fff" stroke="#10104a"/><path d="M5.500 4.500h5l2 2v6h-7z" fill="#fff" stroke="#10104a"/><path d="M2 3.500h3M2 5.500h3M7 8.500h4M7 10.500h4" stroke="#10104a"/></svg>
<div style="left:1203px;top:851px;width:18px;height:18px;background:#eef0f4;border:1.500px solid #283878;border-radius:4px;"></div>
<svg style="left:1205px;top:853px" width="14" height="14" viewBox="0 0 14 14" shape-rendering="crispEdges" shape-rendering="geometricPrecision"><path d="M5 1h8l-5 11h-8z" fill="#fff" stroke="#606848" stroke-width="0.800"/><path d="M2.200 7h8l-2.200 5h-8z" fill="#e8e048" stroke="#606848" stroke-width="0.800"/></svg>
<div style="left:1226px;top:853px;width:15px;height:14px;background:linear-gradient(to bottom,#4a74ea,#5c88f4);"></div>
<div style="left:1230px;top:865px;width:7px;height:2px;background:#fff;"></div>
<div style="left:1243px;top:852px;width:13px;height:14px;background:#f4f4f4;border:1.500px solid #0c1450;border-radius:3px;"></div>
<div style="left:1245px;top:854px;width:9px;height:10px;background:#fff;border:1px solid #000;border-top:3px solid #000;"></div>
<div style="left:1261px;top:853px;width:15px;height:14px;background:#b87c98;"></div>
<svg style="left:1263px;top:855px" width="14" height="13" viewBox="0 0 14 13" shape-rendering="crispEdges" shape-rendering="geometricPrecision"><path d="M1 1l11 11M12 1l-11 11" stroke="#fff" stroke-width="2.200" fill="none"/></svg>
<div style="left:3px;top:974.5px;height:15px;line-height:15px;font:normal 11px 'Liberation Sans';line-height:15px;letter-spacing:-0.436px;color:#000;white-space:pre;">Simulation</div>
<div style="left:0px;top:972px;width:922px;height:21px;border-top:1px solid #aca899;border-right:1px solid #fff;border-bottom:1px solid #fff;"></div>
<div style="left:1150px;top:973px;width:46px;height:19px;border-top:1px solid #aca899;border-left:1px solid #aca899;border-right:1px solid #fff;border-bottom:1px solid #fff;"></div>
<div style="left:1197px;top:973px;width:45px;height:19px;border-top:1px solid #aca899;border-left:1px solid #aca899;border-right:1px solid #fff;border-bottom:1px solid #fff;"></div>
<div style="left:1243px;top:973px;width:37px;height:19px;border-top:1px solid #aca899;border-left:1px solid #aca899;border-right:1px solid #fff;border-bottom:1px solid #fff;"></div>
<div style="left:1199px;top:974.5px;height:15px;line-height:15px;font:normal 11px 'Liberation Sans';line-height:15px;letter-spacing:-0.283px;color:#000;white-space:pre;">150%</div>
<svg style="left:923px;top:973px" width="16" height="18" viewBox="0 0 16 18" shape-rendering="crispEdges" shape-rendering="geometricPrecision"><rect x="0.500" y="2.500" width="13" height="6" rx="1" fill="#c8ccd0" stroke="#404850"/><path d="M2 4.500h10M2 6.500h10" stroke="#707880"/><path d="M7.500 9v3M3 12.500h10" stroke="#c00000"/><path d="M6 11l5 6M11 11l-5 6" stroke="#e00000" stroke-width="1.600"/></svg>
<div style="left:942px;top:974.5px;height:15px;line-height:15px;font:normal 11px 'Liberation Sans';line-height:15px;letter-spacing:-0.253px;color:#000;white-space:pre;">Modem disconnected</div>
<svg style="left:1048px;top:971px" width="24" height="23" viewBox="0 0 24 23" shape-rendering="crispEdges" shape-rendering="geometricPrecision"><path d="M0 7.500h3M0 15.500h3" stroke="#000"/><path d="M2.500 1.500l2-1h15l2 1v20l-2 1h-15l-2-1z" fill="#b4b4ac" stroke="#000"/><rect x="4.500" y="3.500" width="17" height="16" fill="#d4d4cc" stroke="#000"/><rect x="5" y="6" width="8" height="10" fill="#d4ec20"/><rect x="13" y="6" width="8" height="10" fill="#5cd0e8"/><rect x="4.500" y="5.500" width="17" height="11" fill="none" stroke="#000"/><circle cx="17" cy="11" r="2.300" fill="#c8c8d0" stroke="#303060"/><path d="M17 7.500v7M13.500 11h7" stroke="#303060" stroke-width="0.700"/></svg>
<div style="left:1055px;top:976px;width:8px;font:bold 9px/11px 'Liberation Sans';color:#303000;">7</div>
<div style="left:1076px;top:974.5px;height:15px;line-height:15px;font:normal 11px 'Liberation Sans';line-height:15px;letter-spacing:-0.124px;color:#000;white-space:pre;">0BA7.Standard</div>
<div style="left:0px;top:994px;width:1280px;height:30px;background:linear-gradient(to bottom,#2456b4 0,#3a86ee 1.200px,#3c8af0 2.500px,#2c6adc 3.800px,#2459de 5px,#2458de 20px,#1f4ed0 27px,#1a44c0 30px);"></div>
<div style="left:0px;top:994px;width:97px;height:30px;background:linear-gradient(to bottom,#5eac56 0,#3c9b3a 3px,#2f8f2f 8px,#2c8a2c 15px,#319331 22px,#2b8b2b 27px,#226e22 30px);border-radius:0 12px 12px 0 / 0 15px 15px 0;box-shadow:1px 0 2px #1a3a9a;"></div>
<div style="left:0px;top:994px;width:97px;height:4px;background:linear-gradient(to bottom,rgba(255,255,255,0.35),rgba(255,255,255,0));border-radius:0 12px 0 0;"></div>
<svg style="left:11px;top:1000px" width="19" height="18" viewBox="0 0 19 18" shape-rendering="crispEdges" shape-rendering="geometricPrecision"><path d="M2.500 1.500q3-2 6 0l-1.500 6q-3-2-6 0z" fill="#e8582c"/><path d="M10 2q3 2 6 0l-1.500 6.500q-3 2-6 0z" fill="#7cc030"/><path d="M0.700 9q3-2 6 0l-1.500 6q-3-2-6 0z" fill="#4a7ce8"/><path d="M8 9.700q3 2 6 0l-1.500 6.300q-3 2-6 0z" fill="#f4c020"/></svg>
<div style="left:34px;top:998px;font:italic bold 18px/22px 'Liberation Sans';color:#fff;letter-spacing:-0.300px;text-shadow:1px 1px 1px #204a20;">start</div>
<div style="left:107px;top:998px;width:132px;height:23px;background:linear-gradient(to bottom,#5a9af8 0,#3c81f3 3px,#3a7df0 12px,#3575ea 20px,#2c68dc 23px);border-radius:3px;box-shadow:1px 1px 0 #6ea4f8 inset,-1px -1px 0 #2a5cc8 inset;"></div>
<div style="left:135px;top:1002.0px;height:15px;line-height:15px;font:normal 11px 'Liberation Sans';line-height:15px;letter-spacing:-0.178px;color:#fff;white-space:pre;">SIMATIC Manag…</div>
<div style="left:241px;top:998px;width:135px;height:23px;background:linear-gradient(to bottom,#f8a040 0,#ee8212 3px,#ea7c0c 14px,#e07408 20px,#c86404 23px);border-radius:3px;box-shadow:0 0 0 1px #c06808 inset;"></div>
<div style="left:270px;top:1002.0px;height:15px;line-height:15px;font:normal 11px 'Liberation Sans';line-height:15px;letter-spacing:-0.094px;color:#fff;white-space:pre;">Virus and spywa…</div>
<div style="left:377px;top:998px;width:134px;height:23px;background:linear-gradient(to bottom,#5a9af8 0,#3c81f3 3px,#3a7df0 12px,#3575ea 20px,#2c68dc 23px);border-radius:3px;box-shadow:1px 1px 0 #6ea4f8 inset,-1px -1px 0 #2a5cc8 inset;"></div>
<div style="left:405px;top:1002.0px;height:15px;line-height:15px;font:normal 11px 'Liberation Sans';line-height:15px;letter-spacing:0.044px;color:#fff;white-space:pre;">Inbox - Microsof…</div>
<div style="left:513px;top:998px;width:134px;height:23px;background:linear-gradient(to bottom,#5a9af8 0,#3c81f3 3px,#3a7df0 12px,#3575ea 20px,#2c68dc 23px);border-radius:3px;box-shadow:1px 1px 0 #6ea4f8 inset,-1px -1px 0 #2a5cc8 inset;"></div>
<div style="left:541px;top:1002.0px;height:15px;line-height:15px;font:normal 11px 'Liberation Sans';line-height:15px;letter-spacing:-0.030px;color:#fff;white-space:pre;">Siemens Industr…</div>
<div style="left:649px;top:998px;width:134px;height:23px;background:linear-gradient(to bottom,#5a9af8 0,#3c81f3 3px,#3a7df0 12px,#3575ea 20px,#2c68dc 23px);border-radius:3px;box-shadow:1px 1px 0 #6ea4f8 inset,-1px -1px 0 #2a5cc8 inset;"></div>
<div style="left:677px;top:1002.0px;height:15px;line-height:15px;font:normal 11px 'Liberation Sans';line-height:15px;letter-spacing:-0.279px;color:#fff;white-space:pre;">My Documents</div>
<div style="left:785px;top:998px;width:134px;height:23px;background:linear-gradient(to bottom,#5a9af8 0,#3c81f3 3px,#3a7df0 12px,#3575ea 20px,#2c68dc 23px);border-radius:3px;box-shadow:1px 1px 0 #6ea4f8 inset,-1px -1px 0 #2a5cc8 inset;"></div>
<div style="left:812px;top:1002.0px;height:15px;line-height:15px;font:normal 11px 'Liberation Sans';line-height:15px;letter-spacing:-0.211px;color:#fff;white-space:pre;">2  Adobe Reader</div>
<div style="left:921px;top:998px;width:134px;height:23px;background:linear-gradient(to bottom,#5a9af8 0,#3c81f3 3px,#3a7df0 12px,#3575ea 20px,#2c68dc 23px);border-radius:3px;box-shadow:1px 1px 0 #6ea4f8 inset,-1px -1px 0 #2a5cc8 inset;"></div>
<div style="left:949px;top:1002.0px;height:15px;line-height:15px;font:normal 11px 'Liberation Sans';line-height:15px;letter-spacing:-0.032px;color:#fff;white-space:pre;">Weekmenu 21 (…</div>
<div style="left:1057px;top:998px;width:135px;height:23px;background:linear-gradient(to bottom,#1a3fa0 0,#1d47b6 3px,#1e4ab9 14px,#204ec0 23px);border-radius:3px;box-shadow:0 0 0 1px #163890 inset;"></div>
<div style="left:1086px;top:1002.0px;height:15px;line-height:15px;font:normal 11px 'Liberation Sans';line-height:15px;letter-spacing:-0.316px;color:#fff;white-space:pre;">LOGO!Soft Comf…</div>
<div style="left:116px;top:1001px;width:16px;height:16px;background:#c8c0c0;"></div>
<svg style="left:116px;top:1001px" width="16" height="16" viewBox="0 0 16 16" shape-rendering="crispEdges" shape-rendering="geometricPrecision"><path d="M2 14q-2-3 2-7l5-6q3-1 5 1l-2 7l-5 6z" fill="#000"/><path d="M11 8l3 1l-1.500 5" fill="none" stroke="#20d0e0" stroke-width="1.500"/><path d="M4 8l4 5" stroke="#fff" stroke-width="0.800"/></svg>
<svg style="left:250px;top:1000px" width="18" height="18" viewBox="0 0 18 18" shape-rendering="crispEdges" shape-rendering="geometricPrecision"><path d="M1 3q8-4 16 0q-1 3-3 4q-5-2-10 0q-2-1-3-4z" fill="#e8e8f0"/><path d="M3 8q6-2 12 0q-1 3-2.500 3.500q-3.500-1-7 0q-1.500-0.500-2.500-3.500z" fill="#b8bcc8"/><path d="M6 12.500q3-1 6 0q-1 3-3 4.500q-2-1.500-3-4.500z" fill="#8890a0"/></svg>
<div style="left:386px;top:1001px;width:16px;height:16px;background:#f8e8b0;border:1px solid #c89030;"></div>
<svg style="left:386px;top:1001px" width="16" height="16" viewBox="0 0 16 16" shape-rendering="crispEdges" shape-rendering="geometricPrecision"><circle cx="8" cy="8" r="4.500" fill="#fff" stroke="#c88020" stroke-width="1.500"/><path d="M8 5v3.500h2.500" fill="none" stroke="#805010" stroke-width="1"/></svg>
<svg style="left:522px;top:1000px" width="18" height="18" viewBox="0 0 18 18" shape-rendering="crispEdges" shape-rendering="geometricPrecision"><circle cx="9" cy="9" r="8" fill="#e8681c"/><circle cx="9" cy="8" r="5" fill="#3858c0"/><path d="M2 6q4 6 10 3q2 4-3 8q-7-1-7-11z" fill="#f89020"/><path d="M3 4q3-3 7-3q-3 2-3 5z" fill="#f8c030"/></svg>
<svg style="left:657px;top:1000px" width="19" height="18" viewBox="0 0 19 18" shape-rendering="crispEdges" shape-rendering="geometricPrecision"><path d="M1 5h6l1.500 2h9v10h-16.500z" fill="#f0c860" stroke="#a07820"/><rect x="5" y="1.500" width="9" height="7" fill="#fff" stroke="#8890a0"/><path d="M1 9h17v8h-17z" fill="#f8d878" stroke="#a07820"/></svg>
<div style="left:794px;top:1001px;width:17px;height:17px;background:linear-gradient(135deg,#e82020,#a80808);border-radius:2px;"></div>
<svg style="left:794px;top:1001px" width="17" height="17" viewBox="0 0 17 17" shape-rendering="crispEdges" shape-rendering="geometricPrecision"><path d="M3 14q3-4 5-11q1 6 6 9q-6-1-11 2z" fill="none" stroke="#fff" stroke-width="1.300"/></svg>
<svg style="left:909px;top:1007px" width="7" height="4" viewBox="0 0 7 4" shape-rendering="crispEdges" shape-rendering="geometricPrecision"><path d="M0 0h7l-3.500 4z" fill="#fff"/></svg>
<svg style="left:930px;top:1000px" width="18" height="18" viewBox="0 0 18 18" shape-rendering="crispEdges" shape-rendering="geometricPrecision"><rect x="3.500" y="1.500" width="13" height="15" fill="#fff" stroke="#8090b0"/><path d="M6 5h8M6 8h8M6 11h8M6 14h8" stroke="#90a0c0"/><rect x="0.500" y="3.500" width="10" height="10" fill="#2a4a9c" stroke="#fff" stroke-width="0.800"/><path d="M2.500 5.500l1.500 6l1.500-4l1.500 4l1.500-6" fill="none" stroke="#fff" stroke-width="1.200"/></svg>
<div style="left:1066px;top:1001px;width:17px;height:17px;background:#a9a4e6;"></div>
<svg style="left:1066px;top:1001px" width="17" height="17" viewBox="0 0 17 17" shape-rendering="crispEdges" ><rect x="1.500" y="2.500" width="3" height="4" fill="none" stroke="#3a2c90"/><rect x="1.500" y="9.500" width="3" height="4" fill="none" stroke="#3a2c90"/><rect x="7" y="1" width="1" height="12" fill="#20186c"/><rect x="9.500" y="2.500" width="3" height="4" fill="none" stroke="#3a2c90"/><rect x="13" y="4" width="1" height="10" fill="#20186c"/><rect x="9" y="11" width="3" height="4" fill="#1a1478"/><rect x="14" y="10" width="2" height="5" fill="#1a1478"/><rect x="5" y="12" width="3" height="3" fill="#0c0c50"/></svg>
<div style="left:1206px;top:994px;width:74px;height:30px;background:linear-gradient(to bottom,#0c4fb4 0,#1a8ce8 2px,#1d9df0 4px,#1594ec 8px,#1189e6 14px,#128de8 22px,#0f7fdc 27px,#0a5cb8 30px);"></div>
<div style="left:1205px;top:994px;width:1px;height:30px;background:#0c2c88;"></div>
<svg style="left:1194.5px;top:998.3px" width="22" height="22" viewBox="0 0 22 22" shape-rendering="crispEdges" shape-rendering="geometricPrecision"><circle cx="11" cy="11" r="9.500" fill="#3a8cf0" stroke="#62a8f6" stroke-width="1"/><circle cx="11" cy="11" r="8" fill="#2a78e8"/><path d="M13 6.500l-4.500 4.500l4.500 4.500" fill="none" stroke="#fff" stroke-width="2.400"/></svg>
<svg style="left:1216px;top:1001px" width="16" height="16" viewBox="0 0 16 16" shape-rendering="crispEdges" shape-rendering="geometricPrecision"><path d="M0 2q8-4 16 0q-1 3-3 4q-5-2-10 0q-2-1-3-4z" fill="#e0e4ec"/><path d="M2.500 7q5.500-2 11 0q-1 2.500-2.500 3q-3-1-6 0q-1.500-0.500-2.500-3z" fill="#b0b8c8"/><path d="M5.500 11q2.500-1 5 0q-1 2.500-2.500 4q-1.500-1.500-2.500-4z" fill="#8890a0"/></svg>
<div style="left:1239px;top:1002.0px;height:15px;line-height:15px;font:normal 11px 'Liberation Sans';line-height:15px;letter-spacing:0.058px;color:#fff;white-space:pre;">11:35</div>
</body></html>
